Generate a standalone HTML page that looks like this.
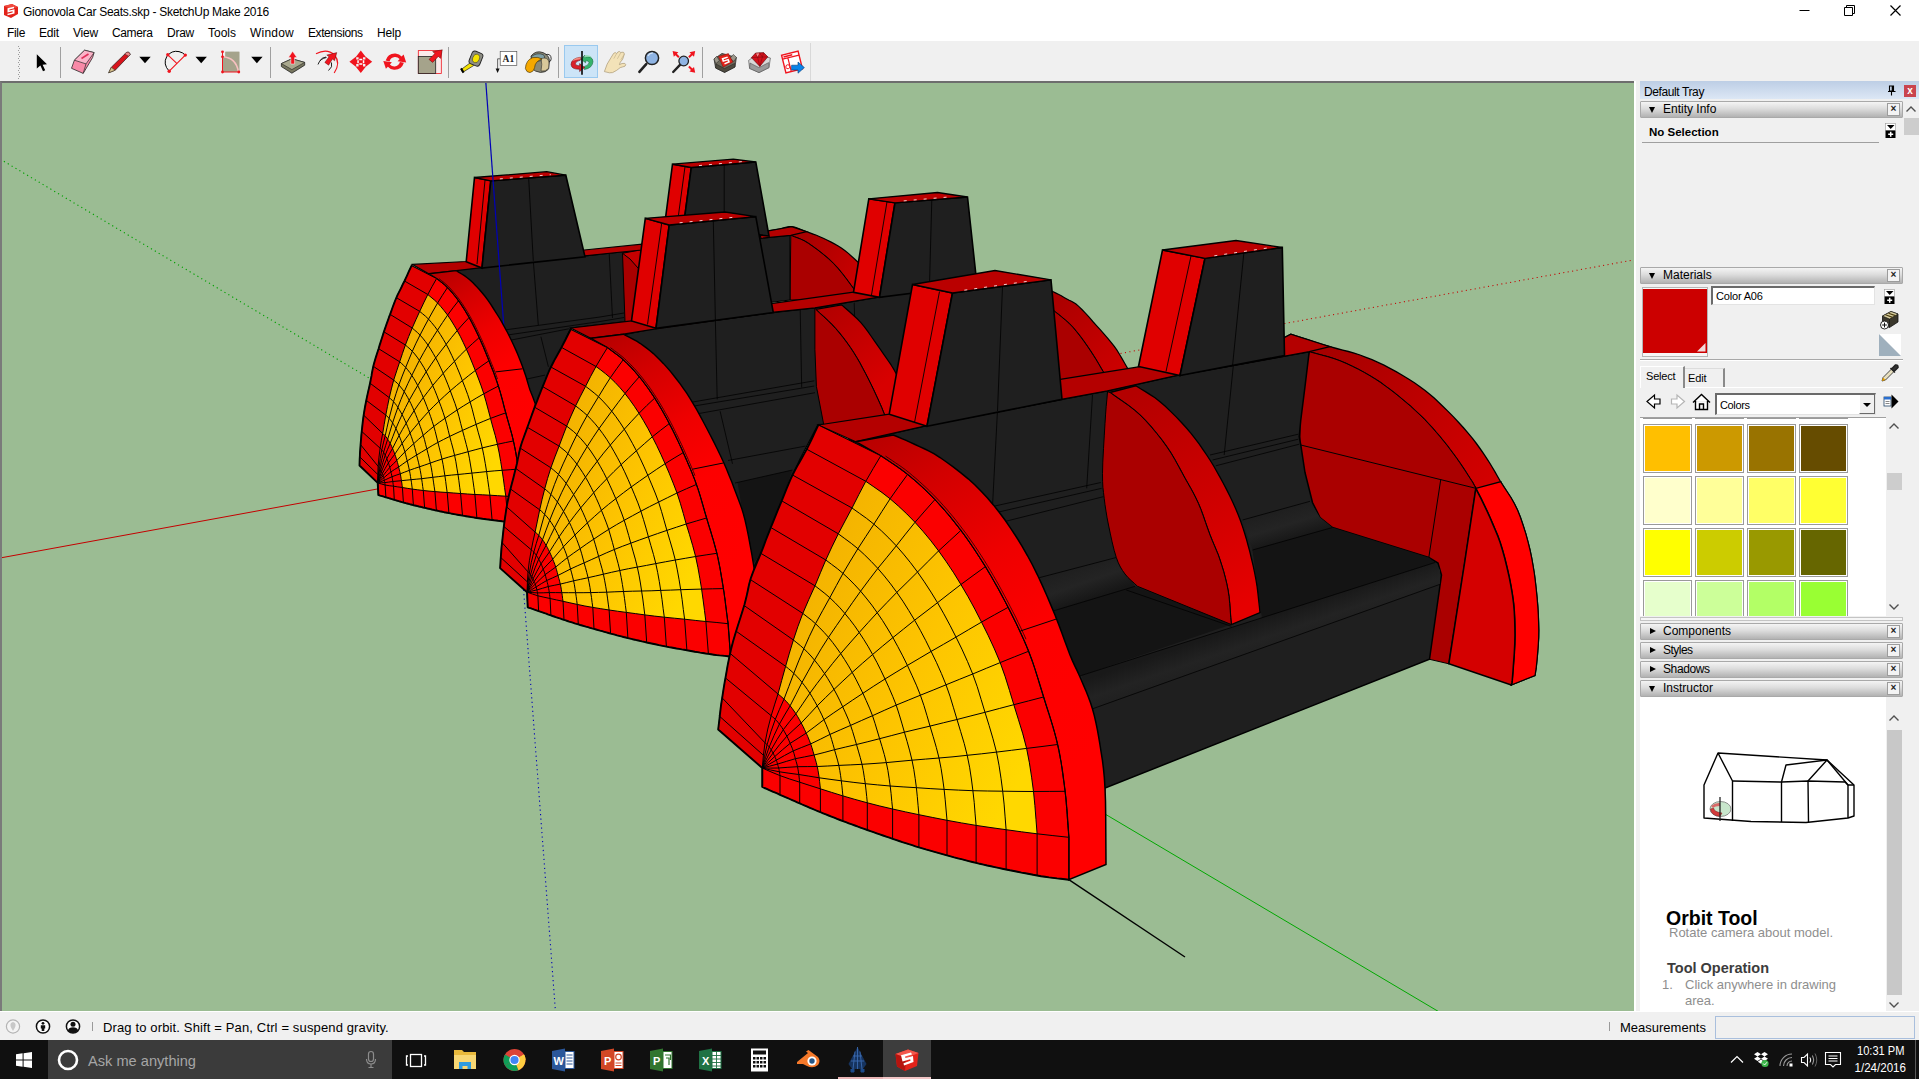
<!DOCTYPE html>
<html lang="en">
<head>
<meta charset="utf-8">
<title>Gionovola Car Seats.skp - SketchUp Make 2016</title>
<style>
*{box-sizing:border-box;margin:0;padding:0}
html,body{width:1919px;height:1079px;overflow:hidden;background:#f0f0f0;font-family:"Liberation Sans",sans-serif;font-size:12px;color:#000}
.abs{position:absolute}
#titlebar{position:absolute;left:0;top:0;width:1919px;height:23px;background:#fff}
#titlebar .t{position:absolute;left:23px;top:5px;font-size:12px;letter-spacing:-0.276px;white-space:nowrap}
#menubar{position:absolute;left:0;top:23px;width:1919px;height:18px;background:#fff}
#menubar span{position:absolute;top:3px;font-size:12px;white-space:nowrap}
#toolbar{position:absolute;left:0;top:41px;width:1919px;height:41px;background:#f0f0f0}
#tbbox{position:absolute;left:0;top:2px;width:811px;height:39px;border-right:1px solid #d8d8d8;border-bottom:1px solid #d8d8d8}
.sep{position:absolute;top:4px;width:1px;height:30px;background:#a8a8a8}
#viewport{position:absolute;left:0;top:81px;width:1634px;height:930px;background:#9bbc93;border-top:2px solid #6d6d6d;border-left:2px solid #7a7a7a;overflow:hidden}
#tray{position:absolute;left:1635px;top:82px;width:284px;height:931px;background:#f0f0f0}
.hdr{position:absolute;left:5px;width:263px;height:17px;border:1px solid #a9a9a9;border-radius:1px;background:linear-gradient(#f4f4f4,#dcdcdc 45%,#b2b2b2);font-size:12px;line-height:15px;white-space:nowrap}
.hdr .tx{position:absolute;left:22px;top:0}
.hdr .cl{position:absolute;right:2px;top:1px;width:13px;height:13px;border:1px solid #9c9c9c;background:#f3f3f3;font-size:10px;line-height:10px;text-align:center;font-weight:bold;color:#222}
.tri-d{position:absolute;left:8px;top:5px;width:0;height:0;border-left:3.5px solid transparent;border-right:3.5px solid transparent;border-top:6px solid #000}
.tri-r{position:absolute;left:9px;top:4px;width:0;height:0;border-top:3.5px solid transparent;border-bottom:3.5px solid transparent;border-left:6px solid #000}
.sw{position:absolute;width:49px;height:49px;border:1px solid #9a9a9a;background:#fff;padding:1px}
.sw i{display:block;width:100%;height:100%}
#status{position:absolute;left:0;top:1011px;width:1919px;height:29px;background:#f0f0f0;border-top:1px solid #fff}
#taskbar{position:absolute;left:0;top:1040px;width:1919px;height:39px;background:#101010}
</style>
</head>
<body>
<div id="titlebar">
<svg class="abs" style="left:3px;top:3px" width="16" height="16" viewBox="0 0 16 16"><path d="M1 3 L9 1 L15 4 L15 11 L8 15 L1 12 Z" fill="#e2231a"/><path d="M1 3 L9 1 L15 4 L8 6 Z" fill="#f04a3e"/><path d="M4.5 5.2 L11 3.8 L11 5.3 L6.3 6.4 L6.3 7.4 L11.5 6.3 L11.5 10.5 L4.5 12.2 L4.5 10.7 L9.6 9.5 L9.6 8.3 L4.5 9.5 Z" fill="#fff"/></svg>
<div class="t">Gionovola Car Seats.skp - SketchUp Make 2016</div>
<svg class="abs" style="left:1780px;top:0" width="139" height="23" viewBox="0 0 139 23"><path d="M19.5 10.5 H29.5" stroke="#000" fill="none"/><path d="M64.5 7.5 H72.5 V15.5 H64.5 Z M66.5 7.5 V5.5 H74.5 V13.5 H72.5" stroke="#000" fill="none"/><path d="M110.5 5.5 L120.5 15.5 M120.5 5.5 L110.5 15.5" stroke="#000" fill="none" stroke-width="1.2"/></svg>
</div>
<div id="menubar">
<span style="left:7px;letter-spacing:-0.336px">File</span><span style="left:39px;letter-spacing:-0.172px">Edit</span><span style="left:73px;letter-spacing:-0.199px">View</span><span style="left:112px;letter-spacing:-0.365px">Camera</span><span style="left:167px;letter-spacing:-0.254px">Draw</span><span style="left:208px;letter-spacing:0px">Tools</span><span style="left:250px;letter-spacing:0.219px">Window</span><span style="left:308px;letter-spacing:-0.42px">Extensions</span><span style="left:377px;letter-spacing:-0.172px">Help</span>
</div>
<div id="toolbar"><div id="tbbox"></div>
<svg class="abs" style="left:0;top:2px" width="812" height="39" viewBox="0 43 812 39">
<g fill="#9a9a9a"><rect x="18" y="46" width="1" height="1"/><rect x="19" y="48" width="1" height="1"/><rect x="18" y="50" width="1" height="1"/><rect x="19" y="52" width="1" height="1"/><rect x="18" y="54" width="1" height="1"/><rect x="19" y="56" width="1" height="1"/><rect x="18" y="58" width="1" height="1"/><rect x="19" y="60" width="1" height="1"/><rect x="18" y="62" width="1" height="1"/><rect x="19" y="64" width="1" height="1"/><rect x="18" y="66" width="1" height="1"/><rect x="19" y="68" width="1" height="1"/><rect x="18" y="70" width="1" height="1"/><rect x="19" y="72" width="1" height="1"/><rect x="18" y="74" width="1" height="1"/><rect x="19" y="76" width="1" height="1"/><rect x="18" y="78" width="1" height="1"/></g>
<g fill="#a0a0a0"><rect x="60" y="47" width="1" height="31"/><rect x="270" y="47" width="1" height="31"/><rect x="448" y="47" width="1" height="31"/><rect x="558" y="47" width="1" height="31"/><rect x="702" y="47" width="1" height="31"/></g>
<!-- select -->
<path d="M36.8 54.2 L36.8 68.6 L40.4 65.6 L43 71.3 L45.2 70.3 L42.6 64.7 L47 64.3 Z" fill="#000"/>
<!-- eraser -->
<path d="M74.4 60.2 L84.6 50.2 L94.1 52.6 L92.6 57.5 L83.2 73.4 L71.5 68.3 Z" fill="#f98aa8" stroke="#2a2a2a" stroke-width="0.8" stroke-linejoin="round"/>
<path d="M74.4 60.2 L84.6 50.2 L94.1 52.6 L86 63.9 Z" fill="#fbb3c8" stroke="#2a2a2a" stroke-width="0.7" stroke-linejoin="round"/>
<path d="M86 63.9 L83.2 73.4" stroke="#2a2a2a" stroke-width="0.7"/>
<path d="M81.5 58.5 L88.5 54" stroke="#e0305a" stroke-width="1.6"/>
<!-- pencil -->
<path d="M108.7 72.8 L111.3 67.3 L126.3 52.6 Q129.5 51.2 130.2 54.6 L115.2 70.2 Z" fill="#d8141c" stroke="#3a2a2a" stroke-width="0.8"/>
<path d="M108.7 72.8 L111.3 67.3 L115.2 70.2 Z" fill="#d9c38e" stroke="#3a3a2a" stroke-width="0.6"/>
<path d="M126.3 52.6 Q129.5 51.2 130.2 54.6 L128.6 56.2 L124.7 54.1 Z" fill="#e88" stroke="#3a2a2a" stroke-width="0.5"/>
<!-- dropdown arrows -->
<path d="M139.3 56.8 L150.7 56.8 L145 63.3 Z M195.5 56.8 L206.9 56.8 L201.2 63.3 Z M251.2 56.8 L262.6 56.8 L256.9 63.3 Z" fill="#000"/>
<!-- arc -->
<path d="M169.2 71.2 Q162.5 64 166.8 56.5 Q171.5 50 179 51.6 Q183 52.5 185.3 55.1" fill="none" stroke="#000" stroke-width="1"/>
<path d="M169.2 71.2 L185.3 55.1 M167.8 54.8 L177.3 63.9" stroke="#f0141e" stroke-width="1.1" fill="none"/>
<g fill="#f0141e"><circle cx="167.8" cy="54.8" r="1.7"/><circle cx="185.3" cy="55.1" r="1.7"/><circle cx="169.2" cy="71.2" r="1.7"/></g>
<!-- shape -->
<rect x="225.4" y="51.8" width="13.9" height="19.8" fill="#a5a38b"/>
<path d="M222.5 56.8 Q236 57.5 238.5 72" fill="#f0f0f0" stroke="none"/>
<path d="M222.5 56.8 L222.5 72 L238.5 72 Q236 57.5 222.5 56.8Z" fill="#a5a38b"/>
<path d="M225.4 51.8 h13.9 v19.8 h-1 Q236 57.5 225.4 56.9 Z" fill="#a5a38b"/>
<path d="M222.5 56.8 Q236 57.5 238.5 72" fill="none" stroke="#f8c0c0" stroke-width="1.6"/>
<path d="M222.5 51.5 L222.5 72 L239 72" fill="none" stroke="#f0141e" stroke-width="1"/>
<g fill="#f0141e"><circle cx="222.5" cy="51.8" r="1.4"/><circle cx="222.5" cy="56.8" r="1.4"/><circle cx="222.5" cy="72" r="1.4"/><circle cx="238.8" cy="72" r="1.4"/></g>
<!-- push pull -->
<path d="M281.4 63.6 L291.9 58.8 L304.7 62.4 L304.7 65.2 L291.9 73.2 L281.4 66.6 Z" fill="#77765f" stroke="#222" stroke-width="0.8" stroke-linejoin="round"/>
<path d="M281.4 63.6 L291.9 58.8 L304.7 62.4 L291.9 69.6 Z" fill="#a9a88e" stroke="#222" stroke-width="0.6" stroke-linejoin="round"/>
<path d="M292.6 51.3 L297 57.6 L294.6 57.6 L294.6 64 L290.8 64 L290.8 57.6 L288.4 57.6 Z" fill="#f0141e" stroke="#fff" stroke-width="0.5"/>
<!-- follow me -->
<path d="M316 53.8 Q327 48 334.5 55 Q341 63 334.2 73" fill="none" stroke="#f0141e" stroke-width="1.2"/>
<path d="M318 64.5 Q320 58.5 326.5 57.5 M328.5 70.5 Q333 67 331.5 62.5 M319.5 61 Q322 57.5 326 57" fill="none" stroke="#222" stroke-width="1"/>
<path d="M336.8 52.6 L334.6 60.8 L332.5 59 L328.6 65.2 L324.8 62.4 L329 56.8 L326.8 55 Z" fill="#f0141e" stroke="#400" stroke-width="0.4"/>
<!-- move -->
<path d="M360.8 50.6 L366 57.2 L363 57.2 L363 59.6 L365.4 59.6 L365.4 56.6 L372.2 61.8 L365.4 67 L365.4 64 L363 64 L363 66.4 L366 66.4 L360.8 73 L355.6 66.4 L358.6 66.4 L358.6 64 L356.2 64 L356.2 67 L349.4 61.8 L356.2 56.6 L356.2 59.6 L358.6 59.6 L358.6 57.2 L355.6 57.2 Z" fill="#f0141e"/>
<path d="M359.3 58.8 h3 v1.5 h-3z M359.3 63.3 h3 v1.5 h-3z M357.3 60.3 h1.5 v3 h-1.5z M362.8 60.3 h1.5 v3 h-1.5z" fill="#fff"/>
<!-- rotate -->
<path d="M385.6 60.6 Q388 53.2 395.5 53.6 Q399.5 54 401.6 56.6 L403.6 54.6 L406.2 62.4 L397.6 61.2 L399.6 59 Q397.5 56.8 394.8 57 Q390.6 57.4 389.6 61.4 Z" fill="#f0141e"/>
<path d="M403.9 62.8 Q401.5 70.2 394 69.8 Q390 69.4 387.9 66.8 L385.9 68.8 L383.3 61 L391.9 62.2 L389.9 64.4 Q392 66.6 394.7 66.4 Q398.9 66 399.9 62 Z" fill="#f0141e"/>
<!-- scale -->
<rect x="418.3" y="50.6" width="23" height="22.8" fill="#fbeaea" stroke="#f0141e" stroke-width="0.8"/>
<rect x="418.3" y="56.4" width="17.4" height="17" fill="#a5a38b" stroke="#222" stroke-width="0.8"/>
<path d="M442.3 49.8 L440.6 58.4 L438.3 56.4 L432.6 62.4 L429 59.4 L434.8 53.6 L432.6 51.6 Z" fill="#f0141e" stroke="#300" stroke-width="0.4"/>
<!-- tape -->
<path d="M462.6 72.4 L461 69.6 L470.8 62.4 L473.6 65.6 Z" fill="#f4e200" stroke="#222" stroke-width="0.7"/>
<path d="M461 68.4 l2.6 4.2" stroke="#000" stroke-width="2"/>
<g transform="rotate(22 476 58.5)"><rect x="470.3" y="51.8" width="11.4" height="13.6" rx="3" fill="#8d8d84" stroke="#222" stroke-width="0.9"/><ellipse cx="476" cy="58.4" rx="3.3" ry="4.4" fill="#f4e200" stroke="#333" stroke-width="0.5"/></g>
<!-- text -->
<rect x="500.2" y="51.4" width="16.6" height="14" fill="#fff" stroke="#555" stroke-width="0.7"/>
<text x="502.6" y="62" font-family="Liberation Serif,serif" font-size="9.5" font-weight="bold" fill="#222">A1</text>
<path d="M500.2 58.8 H497.6 V69.5" fill="none" stroke="#444" stroke-width="0.8"/>
<path d="M495.6 68.6 h4 l-2 4.4z" fill="#111"/>
<!-- paint bucket -->
<path d="M531 56 Q536 50 543 52.6 Q549 55 549.4 60.4 L548.6 69 Q546 72.6 540.4 72.4 Q534.6 71.6 532.6 68.8 Z" fill="#8b8a76" stroke="#222" stroke-width="0.8"/>
<path d="M531.4 56.6 Q536.5 52.2 543.4 54.6 Q546 57 543.6 59.6 Q537 62.6 532.6 60 Z" fill="#7fa0a6" stroke="#222" stroke-width="0.6"/>
<path d="M541 58.6 Q547.6 56.6 549 62 L548.6 68.4 Q545.6 71.6 541 71 Q542.6 64 541 58.6Z" fill="#d9c99a" stroke="#222" stroke-width="0.5"/>
<path d="M525.4 68.6 Q525.8 60 532.8 57.6 Q538.2 56.6 542 59 Q535 61.4 534.6 67.6 Q534 71.8 530 72.6 Q526.4 72.6 525.4 68.6Z" fill="#f5a800" stroke="#3a2a00" stroke-width="0.6"/>
<path d="M545.6 54.6 Q551 53.2 551.2 58.8 Q551 61.6 548.8 62" fill="none" stroke="#222" stroke-width="0.9"/>
<!-- orbit selected -->
<rect x="564.5" y="45.5" width="33" height="32" fill="#cce4f7" stroke="#99c9ef" stroke-width="1"/>
<path d="M583.6 57.4 Q592.6 55 593 61.6 Q592.6 68 584.4 69.6 L584.4 66.4 Q588.8 65.4 589 62.4 Q588.6 60.4 585.6 60.8 L585.6 62.8 L581 59.2 L585 55 Z" fill="#35b36b" stroke="#0c5a2c" stroke-width="0.5"/>
<path d="M584.6 55.4 Q589.6 54.4 592 57.4 Q588 55.8 584.6 57.6 Z" fill="#8fdcae"/>
<path d="M580.4 57.2 Q571.2 58.4 571 64.6 Q571.6 69.6 579.6 69.2 L579.6 71.6 L584.6 67.4 L579.6 63.6 L579.6 65.8 Q575.8 65.8 575.4 63.8 Q575.6 61 580.4 60.2 Z" fill="#d8202a" stroke="#600" stroke-width="0.5"/>
<path d="M580.4 57.2 Q574.4 58 572.2 61 Q575.4 59.6 580.4 59.2Z" fill="#f08a80"/>
<path d="M582 51 V74.8" stroke="#111" stroke-width="1.7"/>
<!-- hand -->
<path d="M604.4 71.6 Q606.6 63.6 611 57.6 L613.6 53.4 Q615.4 51.6 616.6 53.6 L617.8 52 Q619.6 50.6 620.8 52.6 L622 52.2 Q624 51.6 624.4 54 L622.6 59.4 Q619.6 62.4 619.4 64.6 Q622 63 624.8 63.4 Q626.6 64.6 625 66.2 Q619.6 67 616.6 70.4 Q612 73.6 609.4 72.8 Z" fill="#f3e2b8" stroke="#a99876" stroke-width="0.7"/>
<path d="M616.6 53.6 L613.8 58.6 M620.8 52.6 L617.4 58.8 M624.2 54.2 L620.8 60" fill="none" stroke="#c4b48e" stroke-width="0.7"/>
<!-- zoom -->
<path d="M646.2 64.2 L639.4 71.8" stroke="#222" stroke-width="2.6" stroke-linecap="round"/>
<circle cx="652" cy="58" r="6.6" fill="#8fb4e3" stroke="#222" stroke-width="1.5"/>
<path d="M648 56 Q649.6 52.8 653 53" fill="none" stroke="#d6e6f8" stroke-width="1.2"/>
<!-- zoom extents -->
<path d="M680.2 64.6 L673.2 72" stroke="#222" stroke-width="2.4" stroke-linecap="round"/>
<circle cx="683.7" cy="61" r="4.8" fill="#8fb4e3" stroke="#222" stroke-width="1.3"/>
<g fill="#f0141e"><path d="M672.6 51 L678.4 52.2 L676.8 53.8 L679.6 56.6 L678.2 58 L675.4 55.2 L673.8 56.8Z"/><path d="M695.2 51 L694 56.8 L692.4 55.2 L689.6 58 L688.2 56.6 L691 53.8 L689.4 52.2Z"/><path d="M695.2 72.8 L689.4 71.6 L691 70 L688.2 67.2 L689.6 65.8 L692.4 68.6 L694 67Z"/></g>
<!-- warehouse -->
<path d="M714 59 L722 53.4 L736.4 57.4 L735 67 L724.6 72.4 L715.6 68Z" fill="#6e6a5c" stroke="#222" stroke-width="0.7"/>
<path d="M714 59 L716.8 56.2 L719.4 60.6 L715.8 63.6 Z M736.4 57.4 L733.4 54.4 L730 58.4 L734 61.4Z" fill="#9b978a" stroke="#222" stroke-width="0.5"/>
<path d="M718.4 56.4 L728.4 53.6 L732.8 62 L723.2 67 Z" fill="#e2231a" stroke="#7a0d08" stroke-width="0.5"/>
<path d="M721.6 58.2 L727.4 56.4 L728 57.8 L723.6 59.2 L724 60.2 L728.6 58.8 L730 62.2 L724.8 64.6 L724.2 63.2 L728 61.6 L727.6 60.6 L722.8 62 Z" fill="#fff"/>
<path d="M716 64 L724.6 68.6 L734.6 63.4 L735 67 L724.6 72.4 L715.6 68Z" fill="#4e4b40" stroke="#222" stroke-width="0.5"/>
<!-- ruby -->
<path d="M748.6 60.4 L757 54.4 L770.4 58 L769 67.6 L759 72.6 L749.6 68.4Z" fill="#d8d8d8" stroke="#444" stroke-width="0.6"/>
<path d="M750 63 L759 67.6 L768.6 62.6 L769 67.6 L759 72.6 L749.6 68.4Z" fill="#9a9a9a" stroke="#444" stroke-width="0.5"/>
<path d="M751.4 57.6 L755.6 53 L763.6 52.6 L767.8 56.8 L759.8 66.4 Z" fill="#d3121c" stroke="#5a0308" stroke-width="0.6"/>
<path d="M751.4 57.6 L767.8 56.8 M755.6 53 L757.6 57.4 L759.8 66.4 L762.4 57.2 L763.6 52.6 M757.6 57.4 L759.6 52.8 L762.4 57.2" fill="none" stroke="#7a0a10" stroke-width="0.5"/>
<path d="M756 53.4 L759.4 53.2 L757.6 56.8Z" fill="#f58a8a"/>
<!-- layout + arrow -->
<g transform="rotate(-14 792 62)"><rect x="783.5" y="53" width="17" height="18" fill="#fff" stroke="#f0141e" stroke-width="1.4"/><path d="M783.5 57 H800.5 M789 57 V71" stroke="#f0141e" stroke-width="1.2"/><rect x="785" y="54.3" width="9" height="1.6" fill="#f0141e"/><circle cx="786.8" cy="65.6" r="2" fill="none" stroke="#f0141e" stroke-width="0.9"/></g>
<path d="M791.6 65.2 H798 V62 L804.4 67.6 L798 73.2 V70 H791.6Z" fill="#0a84e8" stroke="#033b78" stroke-width="0.6"/>
</svg>
</div>
<div id="viewport"><svg class="abs" style="left:-2px;top:-1px" width="1635" height="931" viewBox="0 82 1635 931"><defs><linearGradient id="yelF" gradientUnits="userSpaceOnUse" x1="770" y1="640" x2="1030" y2="760"><stop offset="0" stop-color="#f3b200"/><stop offset="0.5" stop-color="#fdc400"/><stop offset="1" stop-color="#ffd800"/></linearGradient><linearGradient id="yelM" gradientUnits="userSpaceOnUse" x1="530.5" y1="491.5" x2="698.2" y2="565.2"><stop offset="0" stop-color="#f3b200"/><stop offset="0.5" stop-color="#fdc400"/><stop offset="1" stop-color="#ffd800"/></linearGradient><linearGradient id="yelB" gradientUnits="userSpaceOnUse" x1="379.7" y1="400.9" x2="499.4" y2="451.2"><stop offset="0" stop-color="#f3b200"/><stop offset="0.5" stop-color="#fdc400"/><stop offset="1" stop-color="#ffd800"/></linearGradient><linearGradient id="gRE" gradientUnits="userSpaceOnUse" x1="1300" y1="340" x2="1500" y2="480"><stop offset="0" stop-color="#a00000"/><stop offset="0.6" stop-color="#c00000"/><stop offset="1" stop-color="#d40000"/></linearGradient><linearGradient id="gRO" gradientUnits="userSpaceOnUse" x1="1260" y1="620" x2="1272" y2="655"><stop offset="0" stop-color="#191919"/><stop offset="0.5" stop-color="#232323"/><stop offset="1" stop-color="#1e1e1e"/></linearGradient><linearGradient id="gLB" gradientUnits="userSpaceOnUse" x1="1075" y1="568" x2="1086" y2="600"><stop offset="0" stop-color="#1f1f1f"/><stop offset="0.5" stop-color="#242424"/><stop offset="1" stop-color="#171717"/></linearGradient><linearGradient id="gLB2" gradientUnits="userSpaceOnUse" x1="1275" y1="512" x2="1284" y2="542"><stop offset="0" stop-color="#1f1f1f"/><stop offset="0.5" stop-color="#242424"/><stop offset="1" stop-color="#171717"/></linearGradient><linearGradient id="gAB" gradientUnits="userSpaceOnUse" x1="1140" y1="390" x2="1255" y2="600"><stop offset="0" stop-color="#b40000"/><stop offset="0.5" stop-color="#cc0000"/><stop offset="1" stop-color="#e60000"/></linearGradient><linearGradient id="gDB" gradientUnits="userSpaceOnUse" x1="880" y1="430" x2="1090" y2="760"><stop offset="0" stop-color="#b80000"/><stop offset="0.18" stop-color="#d20000"/><stop offset="0.42" stop-color="#ee0000"/><stop offset="0.65" stop-color="#fd0000"/><stop offset="1" stop-color="#ff0000"/></linearGradient><linearGradient id="gMB" gradientUnits="userSpaceOnUse" x1="610" y1="335" x2="745" y2="560"><stop offset="0" stop-color="#b80000"/><stop offset="0.18" stop-color="#d20000"/><stop offset="0.42" stop-color="#ee0000"/><stop offset="0.65" stop-color="#fd0000"/><stop offset="1" stop-color="#ff0000"/></linearGradient><linearGradient id="gBB" gradientUnits="userSpaceOnUse" x1="445" y1="270" x2="535" y2="420"><stop offset="0" stop-color="#b80000"/><stop offset="0.18" stop-color="#d20000"/><stop offset="0.42" stop-color="#ee0000"/><stop offset="0.65" stop-color="#fd0000"/><stop offset="1" stop-color="#ff0000"/></linearGradient><linearGradient id="gME" gradientUnits="userSpaceOnUse" x1="1050" y1="290" x2="1125" y2="365"><stop offset="0" stop-color="#a80000"/><stop offset="1" stop-color="#cc0000"/></linearGradient><linearGradient id="gBE" gradientUnits="userSpaceOnUse" x1="790" y1="228" x2="860" y2="270"><stop offset="0" stop-color="#a00000"/><stop offset="1" stop-color="#c80000"/></linearGradient><linearGradient id="gMA" gradientUnits="userSpaceOnUse" x1="835" y1="305" x2="895" y2="375"><stop offset="0" stop-color="#b40000"/><stop offset="1" stop-color="#d80000"/></linearGradient></defs><polyline points="0,558 514,464" fill="none" stroke="#c40000" stroke-width="1"/><polyline points="514,464 1636,259.5" fill="none" stroke="#c40000" stroke-width="1.05" stroke-dasharray="1.1 3.4"/><polyline points="0,159 514,464" fill="none" stroke="#00a000" stroke-width="1.15" stroke-dasharray="1.2 3.3"/><polyline points="514,464 1441,1013" fill="none" stroke="#00a800" stroke-width="1"/><polyline points="514,464 555.6,1013" fill="none" stroke="#0000b8" stroke-width="1.1" stroke-dasharray="1.2 3.3"/><polyline points="1068.8,879.7 1185,957" fill="none" stroke="#000" stroke-width="1.4"/><polygon points="768.3,230.8 780,229 782.3,228.4 784.5,227.7 786.8,227.1 789.1,226.7 791.7,226.7 794.5,227.2 797.4,228.1 800.4,229.2 803.5,230.5 806.7,231.7 809.9,232.9 813.1,234.1 816.5,235.3 819.8,236.7 823.3,238.3 826.9,240 830.7,241.9 834.4,243.9 838.2,246 841.7,248.3 845.1,250.8 848.4,253.4 851.5,256.2 854.6,259 857.5,261.7 860.2,264.4 862.7,267 865.2,269.7 867.6,272.3 870,275 860,300 858.9,297.9 858,296 856.9,293.9 855.5,291.5 853.3,288.3 850.2,284.1 846.5,279 842.3,273.6 837.8,268.2 833.3,263.3 828.5,258.8 823.3,254.4 818,250.2 812.9,246.5 808.3,243.3 804.3,240.9 800.8,239.2 797.4,237.9 794.2,236.7 790.8,235.3" fill="url(#gBE)" stroke="#000" stroke-width="1.2"/><polygon points="790.8,235.3 794.2,236.7 797.4,237.9 800.8,239.2 804.3,240.9 808.3,243.3 812.9,246.5 818,250.2 823.3,254.4 828.5,258.8 833.3,263.3 837.8,268.2 842.3,273.6 846.5,279 850.2,284.1 853.3,288.3 855.5,291.5 856.9,293.9 858,296 858.9,297.9 860,300 790,300" fill="#aa0000" stroke="#000" stroke-width="1"/><polygon points="440,275 455.8,269.2 585,255.8 621.7,252 640,250 640,320 570.8,328 552,367.5 541,392 538,412 520,380" fill="#1f1f1f" stroke="#000" stroke-width="1.2"/><polygon points="758,238.6 790,235.3 790,300 765,303" fill="#1f1f1f" stroke="#000" stroke-width="1"/><path d="M533.3 260.8 L538.3 325M609.2 253.3 L612.5 318M504.4 330 L600 317 L624 313M507.5 335 L600 321.5 L624 317.5M511.3 340 L568.8 328.8M540.9 336.7 L548.4 366.8M527 379 L545 375.1" fill="none" stroke="#000" stroke-width="0.9" stroke-opacity="0.85"/><polygon points="622.5,253.3 645,249 640,322 625,322" fill="#aa0000" stroke="#000" stroke-width="1"/><polygon points="622.5,253.3 645,249 640,272 638.3,268.3 630,259" fill="#c40000" stroke="#000" stroke-width="1"/><polygon points="412.5,264.4 466.2,261.5 584.2,250 641.7,244.2 641.7,250 621.7,252 585,255.8 456.3,270.6 428.8,273.8" fill="#b40000" stroke="#000" stroke-width="1.2"/><polygon points="760,232 768.3,230.8 791.7,226.7 806.7,231.7 790.8,235.3 760.8,238.3" fill="#b40000" stroke="#000" stroke-width="1.2"/><polygon points="474.5,177.5 490.8,180.8 482,268 466.2,261.7" fill="#e00000" stroke="#000" stroke-width="1.6"/><polyline points="485,180.3 477,264.2" fill="none" stroke="#000" stroke-width="0.9"/><polygon points="490.8,180.8 565.8,175.2 585,256.8 482,268" fill="#1f1f1f" stroke="#000" stroke-width="1.6"/><polyline points="528.7,178.7 533.3,260.8" fill="none" stroke="#000" stroke-width="0.8"/><polygon points="474.5,177.5 546.7,171.7 565.8,175.2 490.8,180.8" fill="#ba0000" stroke="#000" stroke-width="1.3"/><polyline points="499.8,178.9 550.8,174.7" fill="none" stroke="#fff" stroke-width="0.9" stroke-dasharray="3 7" stroke-opacity="0.9"/><polygon points="672.5,164.2 691.3,167.5 683.5,226 664.5,226" fill="#e00000" stroke="#000" stroke-width="1.6"/><polyline points="685,166.7 677,226" fill="none" stroke="#000" stroke-width="0.9"/><polygon points="691.3,167.5 755.8,162 769,236 683.5,226" fill="#1f1f1f" stroke="#000" stroke-width="1.6"/><polyline points="724.2,165 724.2,215" fill="none" stroke="#000" stroke-width="0.8"/><polygon points="672.5,164.2 733.3,159.2 755.8,162 691.3,167.5" fill="#ba0000" stroke="#000" stroke-width="1.3"/><polyline points="699,165.6 742.9,161.5" fill="none" stroke="#fff" stroke-width="0.9" stroke-dasharray="3 7" stroke-opacity="0.9"/><polyline points="485.8,82 514,464" fill="none" stroke="#0000b8" stroke-width="1.2"/><polygon points="428.8,273.8 456.3,270.6 459,272.4 461.7,274 464.4,275.7 467.2,277.7 470,280 473,282.8 476,285.9 479.1,289.3 482.1,292.8 485,296.3 487.7,299.9 490.3,303.7 492.8,307.5 495.2,311.3 497.5,315 499.7,318.5 501.7,321.9 503.6,325.3 505.5,328.8 507.5,332.5 509.5,336.5 511.6,340.8 513.7,345.2 515.7,349.6 517.5,353.8 519.2,357.9 520.8,362.1 522.3,366.1 523.7,370.1 525,373.8 526.2,377.3 527.2,380.7 528.1,383.9 529,386.9 530,389.9 531,392.6 532,394.9 532.9,397.3 533.9,399.9 535,403 536.2,406.8 537.4,411 538.7,415.6 539.9,420.3 541,425 541.9,429.8 542.7,434.8 543.5,439.9 544.2,445 545,450 524.9,523.3 522.4,497.1 521.6,491.5 520.8,485.9 520.1,480.3 519.3,474.7 518.5,469.1 517.5,463.5 516.6,457.9 515.6,452.2 514.5,446.6 513.3,441 512,435.3 510.4,429.7 508.8,424 507.2,418.4 505.7,412.9 504.2,407.4 502.8,402 501.4,396.7 499.9,391.4 498.3,386.1 496.6,380.9 494.7,375.8 492.8,370.7 490.9,365.7 488.9,360.8 487,356 485.1,351.3 483.1,346.6 481.1,342.1 479.1,337.7 477.1,333.4 475.1,329.3 473.1,325.2 471.1,321.3 469,317.6 466.9,313.9 464.8,310.5 462.7,307.1 460.6,303.9 458.4,300.9 456.2,297.9 454,295.1 451.8,292.5 449.6,290 447.4,287.7 445.2,285.6 443,283.8 440.9,282 438.7,280.3 436.6,278.6" fill="url(#gBB)" stroke="#000" stroke-width="1.4"/><polyline points="495.6,371.9 522.5,368.8" fill="none" stroke="#000" stroke-width="1"/><polygon points="377.7,482.9 378.4,495.1 379.3,495.3 380.2,495.6 381.2,495.9 382.1,496.1 383,496.4 383.9,496.7 384.9,497 385.9,497.3 386.9,497.6 387.9,497.9 388.9,498.2 390,498.5 391.1,498.8 392.1,499.2 393.2,499.5 394.3,499.8 395.4,500.2 396.5,500.5 397.6,500.8 398.8,501.2 399.9,501.5 401,501.8 402.2,502.2 403.4,502.5 404.6,502.8 405.8,503.2 407,503.5 408.3,503.8 409.6,504.2 410.8,504.5 412.1,504.8 413.4,505.2 414.8,505.5 416.1,505.8 417.5,506.1 418.9,506.5 420.3,506.8 421.7,507.1 423.1,507.5 424.6,507.8 426,508.1 427.4,508.5 428.9,508.8 430.4,509.1 431.8,509.5 433.3,509.8 434.8,510.2 436.4,510.5 437.9,510.8 439.4,511.2 440.9,511.5 442.5,511.8 444.1,512.2 445.6,512.5 447.2,512.8 448.9,513.1 450.5,513.4 452.2,513.8 453.9,514.1 455.6,514.4 457.3,514.7 459,515 460.8,515.3 462.5,515.6 464.3,515.9 466,516.2 467.8,516.5 469.6,516.8 471.4,517.1 473.3,517.4 475.1,517.7 476.9,518 478.8,518.2 480.7,518.5 482.6,518.8 484.4,519 486.3,519.3 488.3,519.5 490.2,519.8 492.1,520 494.1,520.3 496.1,520.5 498.1,520.8 500.1,521 502.1,521.3 504.1,521.5 506.1,521.8 508.2,522 510.2,522.3 512.3,522.5 514.4,522.7 516.5,522.8 518.6,522.9 520.7,523 522.8,523.1 524.9,523.3 522.4,497.1 521.9,493.6 521.4,490.1 520.9,486.6 520.5,483.1 520,479.6 519.5,476.1 519,472.6 518.5,469.1 517.9,465.6 517.3,462.1 516.7,458.6 516.1,455.1 515.5,451.5 514.8,448 514.1,444.5 513.3,441 512.5,437.5 511.6,433.9 510.6,430.4 509.6,426.8 508.6,423.3 507.6,419.8 506.6,416.3 505.7,412.9 504.7,409.5 503.8,406.1 503,402.7 502.1,399.3 501.2,396 500.3,392.7 499.3,389.4 498.3,386.1 497.2,382.9 496.1,379.6 494.9,376.4 493.8,373.2 492.6,370.1 491.3,367 490.1,363.9 488.9,360.8 487.7,357.8 486.5,354.8 485.3,351.9 484.1,348.9 482.9,346.1 481.6,343.2 480.4,340.4 479.1,337.7 477.9,335 476.6,332.4 475.4,329.8 474.1,327.2 472.8,324.7 471.6,322.3 470.3,319.9 469,317.6 467.7,315.3 466.4,313.1 465.1,310.9 463.8,308.8 462.4,306.7 461.1,304.7 459.8,302.7 458.4,300.9 457.1,299 455.7,297.2 454.3,295.5 452.9,293.8 451.5,292.2 450.1,290.6 448.8,289.1 447.4,287.7 446,286.4 444.7,285.1 443.3,284 442,282.9 440.6,281.8 439.3,280.7 437.9,279.7 436.6,278.6 411.6,265.7 411.6,265.7 410.4,268.2 409.2,270.7 408.1,273.2 406.9,275.8 405.7,278.4 404.5,281 403.1,283.7 401.8,286.5 400.4,289.3 399,292.1 397.6,294.9 396.4,297.7 395.2,300.5 394.1,303.3 393.1,306 392.1,308.8 391.1,311.6 390.1,314.4 389,317.2 388,320.1 386.9,323.1 385.9,326 384.9,328.9 383.9,331.8 383,334.6 382.1,337.5 381.2,340.3 380.3,343.1 379.4,345.9 378.6,348.7 377.7,351.5 376.8,354.3 375.9,357.1 375.1,359.8 374.3,362.6 373.5,365.4 372.9,368.1 372.4,370.6 371.9,373.2 371.5,375.9 370.9,378.9 370.2,382.5 369.3,386.7 368.2,391.4 367.1,396.4 366,401.7 365,407 364.1,412.3 363.3,417.7 362.6,423.3 362,429 361.4,434.6 361,439.9 360.6,444.7 360.3,448.8 360,452.5 359.9,455.8 359.7,459 359.6,462.2 359.5,465.5" fill="#fb0000" stroke="#000" stroke-width="0.8" stroke-linejoin="round"/><polygon points="359.5,465.5 359.6,462.2 359.7,459 359.9,455.8 360,452.5 360.3,448.8 360.6,444.7 361,439.9 361.4,434.6 362,429 362.6,423.3 363.3,417.7 364.1,412.3 365,407 366,401.7 367.1,396.4 368.2,391.4 369.3,386.7 370.2,382.5 370.9,378.9 371.5,375.9 371.9,373.2 372.4,370.6 372.9,368.1 373.5,365.4 374.3,362.6 375.1,359.8 375.9,357.1 376.8,354.3 377.7,351.5 378.6,348.7 379.4,345.9 380.3,343.1 381.2,340.3 382.1,337.5 383,334.6 383.9,331.8 384.9,328.9 385.9,326 386.9,323.1 388,320.1 389,317.2 390.1,314.4 391.1,311.6 392.1,308.8 393.1,306 394.1,303.3 395.2,300.5 396.4,297.7 397.6,294.9 399,292.1 400.4,289.3 401.8,286.5 403.1,283.7 404.5,281 405.7,278.4 406.9,275.8 408.1,273.2 409.2,270.7 410.4,268.2 411.6,265.7 411.6,265.7 436.6,278.6 435.5,280.5 434.3,282.5 433.2,284.5 432.1,286.5 431,288.5 429.9,290.5 428.8,292.5 427.8,294.5 426.7,296.6 425.7,298.7 424.7,300.8 423.7,302.9 422.7,305.1 421.7,307.2 420.7,309.3 419.7,311.4 418.8,313.5 417.8,315.6 416.8,317.6 415.9,319.7 414.9,321.8 414,323.8 413.1,325.9 412.2,328 411.3,330.1 410.4,332.2 409.5,334.4 408.7,336.5 407.8,338.6 407,340.8 406.2,342.9 405.4,345 404.7,347.1 403.9,349.2 403.2,351.2 402.5,353.3 401.8,355.4 401.2,357.5 400.5,359.6 399.7,361.8 399,364 398.2,366.3 397.4,368.6 396.7,370.9 395.9,373.2 395.1,375.5 394.4,377.8 393.7,380.1 393.1,382.3 392.5,384.6 391.9,386.8 391.4,388.9 390.8,391.1 390.3,393.3 389.8,395.5 389.3,397.7 388.8,399.9 388.3,402 387.9,404.2 387.5,406.3 387,408.5 386.6,410.6 386.2,412.8 385.8,415.1 385.4,417.3 385,419.7 384.6,422 384.2,424.4 383.8,426.8 383.4,429.1 383,431.3 382.7,433.5 382.3,435.5 382,437.3 381.7,439.1 381.3,440.8 381,442.6 380.7,444.3 380.4,446.2 380.1,448.2 379.8,450.3 379.5,452.5 379.2,454.8 379,457.1 378.7,459.5 378.5,461.8 378.3,464.1 378.1,466.3 378,468.5 377.9,470.6 377.8,472.6 377.8,474.7 377.8,476.7 377.8,478.8 377.8,480.8 377.7,482.9" fill="#e20000" stroke="none"/><polygon points="402.4,487.5 401.9,484.1 401.4,480.7 400.9,477.2 400.3,473.8 399.5,470.4 398.6,467 397.8,463.6 396.9,460.4 395.9,457.2 394.8,454.2 393.7,451.2 392.6,448.4 391.4,445.8 390.2,443.4 389,441.2 387.7,439.2 386.4,437.4 385.2,435.8 383.9,434.6 382.7,433.5 382.7,433.5 384.2,424.4 385.8,415.1 387.5,406.3 389.3,397.7 391.4,388.9 393.7,380.1 396.7,370.9 399.7,361.8 402.5,353.3 405.4,345 408.7,336.5 412.2,328 415.9,319.7 419.7,311.4 423.7,302.9 427.8,294.5 427.8,294.5 432.6,298.5 437.6,303 442.6,308.6 447.6,315.1 452.4,322.4 457.2,330.6 461.8,339.5 466.4,349.2 470.9,359.5 475.3,370.5 479.6,381.9 483.8,393.8 487.2,405.9 490.5,418.4 494.1,431.3 497.4,444.3 500,457.3 502.1,470.3 504,483.2 505.8,496.2 505.8,496.2 497.7,495.7 489.9,495.2 482.3,494.8 474.9,494.5 467.6,494 460.6,493.5 453.8,493 447.2,492.5 440.9,492.1 434.9,491.6 429,491.1 423.3,490.5 417.7,489.8 412.3,489.1 407.2,488.3 402.4,487.5" fill="url(#yelB)" stroke="none"/><polyline points="497.5,379.1 496.4,375.9 495.2,372.7 494,369.5 492.8,366.4 491.5,363.3 490.3,360.3 489.1,357.2 487.9,354.2 486.7,351.3 485.5,348.4 484.3,345.5 483,342.6 481.8,339.8 480.5,337.1 479.3,334.4 478,331.7 476.7,329.1 475.5,326.6 474.2,324 472.9,321.6 471.6,319.2 470.3,316.8 469,314.5 467.7,312.3 466.4,310.1 465,308 463.7,305.9 462.4,303.8 461,301.9 459.7,300 458.3,298.1 456.9,296.3 455.5,294.5 454.1,292.8 452.7,291.2 451.3,289.6 449.9,288.1 448.5,286.6 447.1,285.3 445.7,284 444.3,282.8 442.9,281.7 441.5,280.6 440.2,279.6 438.9,278.5" fill="none" stroke="#000" stroke-width="0.7"/><polyline points="411.6,265.7 411.6,265.7 410.4,268.2 409.2,270.7 408.1,273.2 406.9,275.8 405.7,278.4 404.5,281 403.1,283.7 401.8,286.5 400.4,289.3 399,292.1 397.6,294.9 396.4,297.7 395.2,300.5 394.1,303.3 393.1,306 392.1,308.8 391.1,311.6 390.1,314.4 389,317.2 388,320.1 386.9,323.1 385.9,326 384.9,328.9 383.9,331.8 383,334.6 382.1,337.5 381.2,340.3 380.3,343.1 379.4,345.9 378.6,348.7 377.7,351.5 376.8,354.3 375.9,357.1 375.1,359.8 374.3,362.6 373.5,365.4 372.9,368.1 372.4,370.6 371.9,373.2 371.5,375.9 370.9,378.9 370.2,382.5 369.3,386.7 368.2,391.4 367.1,396.4 366,401.7 365,407 364.1,412.3 363.3,417.7 362.6,423.3 362,429 361.4,434.6 361,439.9 360.6,444.7 360.3,448.8 360,452.5 359.9,455.8 359.7,459 359.6,462.2 359.5,465.5 377.7,482.9 378.4,495.1 379.3,495.3 380.2,495.6 381.2,495.9 382.1,496.1 383,496.4 383.9,496.7 384.9,497 385.9,497.3 386.9,497.6 387.9,497.9 388.9,498.2 390,498.5 391.1,498.8 392.1,499.2 393.2,499.5 394.3,499.8 395.4,500.2 396.5,500.5 397.6,500.8 398.8,501.2 399.9,501.5 401,501.8 402.2,502.2 403.4,502.5 404.6,502.8 405.8,503.2 407,503.5 408.3,503.8 409.6,504.2 410.8,504.5 412.1,504.8 413.4,505.2 414.8,505.5 416.1,505.8 417.5,506.1 418.9,506.5 420.3,506.8 421.7,507.1 423.1,507.5 424.6,507.8 426,508.1 427.4,508.5 428.9,508.8 430.4,509.1 431.8,509.5 433.3,509.8 434.8,510.2 436.4,510.5 437.9,510.8 439.4,511.2 440.9,511.5 442.5,511.8 444.1,512.2 445.6,512.5 447.2,512.8 448.9,513.1 450.5,513.4 452.2,513.8 453.9,514.1 455.6,514.4 457.3,514.7 459,515 460.8,515.3 462.5,515.6 464.3,515.9 466,516.2 467.8,516.5 469.6,516.8 471.4,517.1 473.3,517.4 475.1,517.7 476.9,518 478.8,518.2 480.7,518.5 482.6,518.8 484.4,519 486.3,519.3 488.3,519.5 490.2,519.8 492.1,520 494.1,520.3 496.1,520.5 498.1,520.8 500.1,521 502.1,521.3 504.1,521.5 506.1,521.8 508.2,522 510.2,522.3 512.3,522.5 514.4,522.7 516.5,522.8 518.6,522.9 520.7,523 522.8,523.1 524.9,523.3" fill="none" stroke="#000" stroke-width="1.9" stroke-linejoin="round" stroke-linecap="round"/><path d="M385.1 485 L385 484.2 L384.9 483.4 L384.8 482.6 L384.6 481.8 L384.5 481.1 L384.3 480.3 L384.2 479.5 L384 478.7 L383.7 477.9 L383.6 477.2 L383.4 476.4 L383.1 475.7 L382.9 475 L382.7 474.2 L382.4 473.6 L382.1 472.9 L381.9 472.2 L381.6 471.6 L381.3 471 L381.1 470.4 L380.8 469.8 L380.5 469.3 L380.2 468.8 L379.9 468.3 L379.6 467.9 L379.3 467.5 L379 467.2 L378.7 466.8 L378.4 466.6 L378.1 466.3M393.5 486.2 L393.2 484.7 L393 483.1 L392.8 481.5 L392.6 479.9 L392.3 478.3 L392 476.7 L391.7 475.1 L391.3 473.5 L390.9 471.9 L390.5 470.3 L390.2 468.8 L389.8 467.3 L389.3 465.8 L388.9 464.3 L388.4 462.9 L387.9 461.5 L387.4 460.1 L386.8 458.8 L386.3 457.6 L385.8 456.4 L385.2 455.2 L384.7 454.2 L384.1 453.2 L383.6 452.2 L383 451.4 L382.4 450.6 L381.8 449.8 L381.2 449.2 L380.7 448.7 L380.1 448.2M402.4 487.5 L402.1 485.3 L401.8 483 L401.4 480.7 L401.1 478.4 L400.7 476.1 L400.3 473.8 L399.8 471.5 L399.2 469.2 L398.6 467 L398.1 464.7 L397.5 462.5 L396.9 460.4 L396.2 458.2 L395.5 456.2 L394.8 454.2 L394.1 452.2 L393.3 450.3 L392.6 448.4 L391.8 446.7 L391 445 L390.2 443.4 L389.4 441.9 L388.6 440.5 L387.7 439.2 L386.9 438 L386 436.8 L385.2 435.8 L384.3 435 L383.5 434.2 L382.7 433.5M412.3 489.1 L411.9 486 L411.5 482.8 L411 479.7 L410.5 476.6 L410 473.4 L409.4 470.3 L408.7 467.1 L408 464 L407.2 460.9 L406.4 457.8 L405.7 454.8 L404.9 451.9 L404 449 L403.1 446.1 L402.1 443.4 L401.1 440.7 L400.1 438.1 L399.1 435.5 L398 433.1 L397 430.8 L395.9 428.6 L394.8 426.6 L393.7 424.7 L392.6 422.9 L391.4 421.2 L390.3 419.7 L389.1 418.3 L388 417.1 L386.9 416.1 L385.8 415.1M423.3 490.5 L422.7 486.6 L422.2 482.6 L421.6 478.7 L421 474.7 L420.3 470.7 L419.5 466.8 L418.6 462.8 L417.6 458.9 L416.6 455 L415.7 451.2 L414.7 447.4 L413.7 443.7 L412.5 440.1 L411.3 436.5 L410 433 L408.8 429.7 L407.5 426.4 L406.2 423.2 L404.8 420.2 L403.5 417.3 L402.1 414.6 L400.7 412.1 L399.3 409.7 L397.9 407.4 L396.5 405.3 L395 403.4 L393.5 401.7 L392.1 400.2 L390.7 398.9 L389.3 397.7M434.9 491.6 L434.2 486.8 L433.5 482.1 L432.8 477.3 L432.1 472.6 L431.3 467.8 L430.3 463.1 L429.2 458.3 L428 453.6 L426.8 448.9 L425.6 444.3 L424.5 439.7 L423.2 435.3 L421.8 430.9 L420.3 426.6 L418.8 422.5 L417.3 418.4 L415.7 414.5 L414.1 410.7 L412.5 407.1 L410.9 403.6 L409.2 400.3 L407.6 397.3 L405.9 394.4 L404.2 391.7 L402.4 389.2 L400.6 387 L398.9 384.9 L397.2 383.1 L395.4 381.6 L393.7 380.1M447.2 492.5 L446.4 487 L445.7 481.4 L444.9 475.8 L444 470.2 L443.1 464.6 L442 459.1 L440.7 453.5 L439.3 447.9 L437.9 442.4 L436.6 437 L435.3 431.7 L433.8 426.4 L432.2 421.3 L430.5 416.3 L428.7 411.4 L426.9 406.6 L425.1 402 L423.3 397.6 L421.5 393.4 L419.6 389.3 L417.7 385.5 L415.8 381.9 L413.8 378.5 L411.8 375.4 L409.8 372.5 L407.7 369.8 L405.7 367.4 L403.7 365.4 L401.7 363.6 L399.7 361.8M460.6 493.5 L459.7 487.2 L458.9 480.8 L458 474.5 L456.9 468.1 L455.9 461.8 L454.6 455.4 L453.1 449 L451.4 442.7 L449.7 436.4 L448.2 430.3 L446.7 424.2 L445 418.3 L443.1 412.4 L441.1 406.7 L439 401.2 L437 395.8 L434.9 390.5 L432.7 385.5 L430.6 380.7 L428.4 376.1 L426.2 371.8 L424 367.7 L421.7 363.9 L419.4 360.3 L417.1 357.1 L414.7 354 L412.3 351.3 L410 349 L407.7 347 L405.4 345M474.9 494.5 L473.9 487.3 L472.9 480.2 L471.9 473.1 L470.7 466 L469.5 458.8 L468.1 451.7 L466.3 444.6 L464.4 437.4 L462.5 430.4 L460.7 423.5 L459 416.7 L457.1 410 L455 403.5 L452.6 397.1 L450.3 390.8 L448 384.8 L445.6 378.9 L443.2 373.3 L440.7 367.9 L438.3 362.8 L435.7 357.9 L433.2 353.4 L430.6 349.1 L428 345.1 L425.4 341.5 L422.7 338.1 L420 335.1 L417.4 332.5 L414.7 330.2 L412.2 328M489.9 495.2 L488.8 487.3 L487.7 479.5 L486.6 471.6 L485.3 463.7 L483.9 455.8 L482.3 447.9 L480.4 440 L478.2 432.2 L476.1 424.4 L474.1 416.8 L472.2 409.2 L470.1 401.9 L467.7 394.6 L465.1 387.6 L462.4 380.7 L459.8 374 L457.1 367.5 L454.5 361.3 L451.7 355.3 L449 349.7 L446.2 344.3 L443.3 339.3 L440.4 334.6 L437.5 330.2 L434.5 326.2 L431.5 322.5 L428.5 319.1 L425.6 316.3 L422.6 313.8 L419.7 311.4M505.8 496.2 L504.5 487.5 L503.4 478.9 L502.1 470.3 L500.7 461.6 L499.2 453 L497.4 444.3 L495.3 435.7 L492.8 427 L490.5 418.4 L488.3 410.1 L486.1 401.8 L483.8 393.8 L481.1 385.8 L478.2 378 L475.3 370.5 L472.3 363.1 L469.4 356 L466.4 349.2 L463.3 342.6 L460.3 336.4 L457.2 330.6 L454 325.1 L450.8 319.9 L447.6 315.1 L444.2 310.7 L440.9 306.7 L437.6 303 L434.3 299.9 L431 297.2 L427.8 294.5M377.7 482.9 L381.4 484 L385.1 485 L389.2 485.7 L393.5 486.2 L397.8 486.9 L402.4 487.5 L407.2 488.3 L412.3 489.1 L417.7 489.8 L423.3 490.5 L429 491.1 L434.9 491.6 L440.9 492.1 L447.2 492.5 L453.8 493 L460.6 493.5 L467.6 494 L474.9 494.5 L482.3 494.8 L489.9 495.2 L497.7 495.7 L505.8 496.2 L514 496.6 L522.4 497.1M377.7 482.9 L381.2 482.8 L384.8 482.6 L388.7 482.1 L392.8 481.5 L397 481.1 L401.4 480.7 L406.1 480.2 L411 479.7 L416.2 479.2 L421.6 478.7 L427.1 478 L432.8 477.3 L438.8 476.6 L444.9 475.8 L451.3 475.1 L458 474.5 L464.8 473.8 L471.9 473.1 L479.1 472.4 L486.6 471.6 L494.2 470.9 L502.1 470.3 L510.2 469.7 L518.5 469.1M377.7 482.9 L381 481.6 L384.3 480.3 L388.1 478.5 L392 476.7 L396.1 475.2 L400.3 473.8 L404.7 472.1 L409.4 470.3 L414.4 468.5 L419.5 466.8 L424.8 465 L430.3 463.1 L436.1 461 L442 459.1 L448.2 457.2 L454.6 455.4 L461.2 453.6 L468.1 451.7 L475.1 449.8 L482.3 447.9 L489.8 446.1 L497.4 444.3 L505.3 442.6 L513.3 441M377.7 482.9 L380.7 480.5 L383.7 477.9 L387.2 474.9 L390.9 471.9 L394.7 469.4 L398.6 467 L402.8 464 L407.2 460.9 L411.8 458 L416.6 455 L421.6 452 L426.8 448.9 L432.2 445.6 L437.9 442.4 L443.7 439.4 L449.7 436.4 L456 433.4 L462.5 430.4 L469.2 427.4 L476.1 424.4 L483.2 421.4 L490.5 418.4 L498 415.6 L505.7 412.9M377.7 482.9 L380.4 479.3 L383.1 475.7 L386.4 471.5 L389.8 467.3 L393.3 463.8 L396.9 460.4 L400.8 456.2 L404.9 451.9 L409.2 447.8 L413.7 443.7 L418.3 439.5 L423.2 435.3 L428.4 430.8 L433.8 426.4 L439.3 422.3 L445 418.3 L450.9 414.2 L457.1 410 L463.5 405.9 L470.1 401.9 L476.8 397.8 L483.8 393.8 L491 389.9 L498.3 386.1M377.7 482.9 L380 478.3 L382.4 473.6 L385.3 468.2 L388.4 462.9 L391.5 458.5 L394.8 454.2 L398.3 448.9 L402.1 443.4 L406 438.2 L410 433 L414.3 427.8 L418.8 422.5 L423.7 416.9 L428.7 411.4 L433.8 406.2 L439 401.2 L444.5 396 L450.3 390.8 L456.3 385.7 L462.4 380.7 L468.8 375.5 L475.3 370.5 L482 365.6 L488.9 360.8M377.7 482.9 L379.6 477.3 L381.6 471.6 L384.1 465.1 L386.8 458.8 L389.6 453.6 L392.6 448.4 L395.7 442.1 L399.1 435.5 L402.5 429.4 L406.2 423.2 L410 417 L414.1 410.7 L418.6 404.1 L423.3 397.6 L428 391.5 L432.7 385.5 L437.8 379.4 L443.2 373.3 L448.7 367.3 L454.5 361.3 L460.3 355.2 L466.4 349.2 L472.7 343.4 L479.1 337.7M377.7 482.9 L379.2 476.4 L380.8 469.8 L382.9 462.4 L385.2 455.2 L387.6 449.3 L390.2 443.4 L393 436.2 L395.9 428.6 L398.9 421.6 L402.1 414.6 L405.5 407.5 L409.2 400.3 L413.4 392.9 L417.7 385.5 L421.9 378.6 L426.2 371.8 L430.9 364.8 L435.7 357.9 L440.9 351.1 L446.2 344.3 L451.6 337.4 L457.2 330.6 L463 324 L469 317.6M377.7 482.9 L378.7 475.7 L379.9 468.3 L381.6 460.2 L383.6 452.2 L385.6 445.7 L387.7 439.2 L390.1 431.2 L392.6 422.9 L395.2 415.1 L397.9 407.4 L400.9 399.6 L404.2 391.7 L407.9 383.5 L411.8 375.4 L415.6 367.8 L419.4 360.3 L423.6 352.7 L428 345.1 L432.7 337.7 L437.5 330.2 L442.5 322.6 L447.6 315.1 L452.9 307.9 L458.4 300.9M377.7 482.9 L378.3 475.1 L379 467.2 L380.3 458.4 L381.8 449.8 L383.4 442.9 L385.2 435.8 L387.1 427.2 L389.1 418.3 L391.3 410 L393.5 401.7 L396.1 393.4 L398.9 384.9 L402.2 376.1 L405.7 367.4 L409 359.3 L412.3 351.3 L416 343.2 L420 335.1 L424.2 327.1 L428.5 319.1 L433 311 L437.6 303 L442.4 295.3 L447.4 287.7M377.7 482.9 L377.8 474.7 L378.1 466.3 L379 457.1 L380.1 448.2 L381.3 440.8 L382.7 433.5 L384.2 424.4 L385.8 415.1 L387.5 406.3 L389.3 397.7 L391.4 388.9 L393.7 380.1 L396.7 370.9 L399.7 361.8 L402.5 353.3 L405.4 345 L408.7 336.5 L412.2 328 L415.9 319.7 L419.7 311.4 L423.7 302.9 L427.8 294.5 L432.1 286.5 L436.6 278.6M360.6 444.7 L378.1 466.3M361.7 431.4 L380.1 448.2M363.7 415.2 L382.7 433.5M366.3 400.4 L385.8 415.1M370 383.2 L389.3 397.7M373.3 366.3 L393.7 380.1M378.6 348.7 L399.7 361.8M383.9 331.8 L405.4 345M390.1 314.4 L412.2 328M396.4 297.7 L419.7 311.4M404.5 281 L427.8 294.5M359.5 456.6 L377.9 474.6M385.1 485 L385.9 497.3M393.5 486.2 L394.3 499.8M402.4 487.5 L403.4 502.5M412.3 489.1 L413.4 505.2M423.3 490.5 L424.6 507.8M434.9 491.6 L436.4 510.5M447.2 492.5 L448.9 513.1M460.6 493.5 L462.5 515.6M474.9 494.5 L476.9 518M489.9 495.2 L492.1 520M505.8 496.2 L508.2 522M522.4 497.1 L524.9 523.3M377.7 482.9 L378.4 495.1M522.4 497.1 L521.9 493.6 L521.4 490.1 L520.9 486.6 L520.5 483.1 L520 479.6 L519.5 476.1 L519 472.6 L518.5 469.1 L517.9 465.6 L517.3 462.1 L516.7 458.6 L516.1 455.1 L515.5 451.5 L514.8 448 L514.1 444.5 L513.3 441 L512.5 437.5 L511.6 433.9 L510.6 430.4 L509.6 426.8 L508.6 423.3 L507.6 419.8 L506.6 416.3 L505.7 412.9 L504.7 409.5 L503.8 406.1 L503 402.7 L502.1 399.3 L501.2 396 L500.3 392.7 L499.3 389.4 L498.3 386.1 L497.2 382.9 L496.1 379.6 L494.9 376.4 L493.8 373.2 L492.6 370.1 L491.3 367 L490.1 363.9 L488.9 360.8 L487.7 357.8 L486.5 354.8 L485.3 351.9 L484.1 348.9 L482.9 346.1 L481.6 343.2 L480.4 340.4 L479.1 337.7 L477.9 335 L476.6 332.4 L475.4 329.8 L474.1 327.2 L472.8 324.7 L471.6 322.3 L470.3 319.9 L469 317.6 L467.7 315.3 L466.4 313.1 L465.1 310.9 L463.8 308.8 L462.4 306.7 L461.1 304.7 L459.8 302.7 L458.4 300.9 L457.1 299 L455.7 297.2 L454.3 295.5 L452.9 293.8 L451.5 292.2 L450.1 290.6 L448.8 289.1 L447.4 287.7 L446 286.4 L444.7 285.1 L443.3 284 L442 282.9 L440.6 281.8 L439.3 280.7 L437.9 279.7 L436.6 278.6M411.6 265.7 L436.6 278.6" fill="none" stroke="#000" stroke-width="1"/><polygon points="1040,286 1042.5,287.1 1045,288.1 1047.5,289.2 1050.1,290.3 1052.7,291.5 1055.5,292.9 1058.3,294.3 1061.3,295.8 1064.1,297.4 1066.8,298.9 1069.2,300.2 1071.4,301.3 1073.6,302.6 1076,304.1 1078.7,306.4 1081.9,309.5 1085.4,313.2 1089.1,317.2 1092.8,321.5 1096.5,325.6 1100.2,329.7 1103.9,333.9 1107.6,338.1 1111.1,342.3 1114.3,346.4 1117.1,350.4 1119.6,354.5 1121.9,358.4 1124.1,362.2 1126.1,365.7 1127.9,368.9 1129.5,371.8 1131,374.5 1132.5,377.2 1134,380 1110,385 1108.7,382.4 1107.5,380 1106.3,377.5 1104.8,374.7 1103.1,371.6 1101,368 1098.7,364 1096.2,359.8 1093.4,355.4 1090.5,350.9 1087.3,346.2 1083.8,341.2 1080.1,336.2 1076.3,331.4 1072.7,327.1 1069.1,323.4 1065.4,320.1 1061.8,317.1 1058.3,314.3 1054.9,311.6 1051.7,309 1048.7,306.7 1045.8,304.5 1042.9,302.3 1040,300" fill="url(#gME)" stroke="#000" stroke-width="1.2"/><polygon points="1040,300 1042.9,302.3 1045.8,304.5 1048.7,306.7 1051.7,309 1054.9,311.6 1058.3,314.3 1061.8,317.1 1065.4,320.1 1069.1,323.4 1072.7,327.1 1076.3,331.4 1080.1,336.2 1083.8,341.2 1087.3,346.2 1090.5,350.9 1093.4,355.4 1096.2,359.8 1098.7,364 1101,368 1103.1,371.6 1104.8,374.7 1106.3,377.5 1107.5,380 1108.7,382.4 1110,385 1040,390" fill="#aa0000" stroke="#000" stroke-width="1"/><polygon points="600,345 626.7,334.1 655.6,328.2 772.8,312.6 814.9,307.8 877.2,297.4 915,291.5 915,420 818,424.6 799.5,460 781.7,500.8 760.8,553.3 750,575 700,480" fill="#1f1f1f" stroke="#000" stroke-width="1.2"/><polygon points="737.5,482.5 792.5,470 781.7,500.8 760.8,553.3 752,566" fill="#141414" stroke="none"/><path d="M714.9 300 L717.2 399.4M800.2 309.6 L801.7 387.5M690 402.5 L814.3 380.8M693 406.2 L814.3 386M699 413.5 L815 392.7M720.1 411.2 L732.5 463.8M728 460.5 L805.4 446.1M735 483 L792.5 470M854.2 302.6 L855 330" fill="none" stroke="#000" stroke-width="0.9" stroke-opacity="0.85"/><polygon points="815.7,309.3 841.6,304.8 845.5,308.3 849.5,311.7 853.4,315.2 857.2,318.8 860.9,322.6 864.4,326.8 867.8,331.3 871,336 874.2,340.6 877.2,344.9 880.2,349.1 883.1,353.3 885.9,357.3 888.4,361 890.6,364.2 892.2,366.7 893.4,368.6 894.3,370.3 895.3,372.1 896.5,374.5 898,377.5 899.7,381 901.5,384.7 903.3,388.4 905,392 890,416 885,416 884.2,413.9 883.4,411.9 882.6,409.9 881.6,407.4 880.2,404.2 878.3,400 876.1,395.2 873.6,389.8 871,384.4 868.3,379 865.6,373.7 862.7,368.3 859.8,362.8 856.7,357.5 853.5,352.3 850.2,347.3 846.7,342.4 843.1,337.6 839.4,333 835.7,328.6 831.8,324.5 827.9,320.6 823.8,316.8 819.7,313.1 815.7,309.3" fill="url(#gMA)" stroke="#000" stroke-width="1.2"/><polygon points="814.9,308.5 814.9,349.3 816.4,386.4 823.8,425 885,416 885,416 884.2,413.9 883.4,411.9 882.6,409.9 881.6,407.4 880.2,404.2 878.3,400 876.1,395.2 873.6,389.8 871,384.4 868.3,379 865.6,373.7 862.7,368.3 859.8,362.8 856.7,357.5 853.5,352.3 850.2,347.3 846.7,342.4 843.1,337.6 839.4,333 835.7,328.6 831.8,324.5 827.9,320.6 823.8,316.8 819.7,313.1 815.7,309.3" fill="#aa0000" stroke="#000" stroke-width="1"/><polygon points="570.8,328 631.7,320.8 772.7,303.3 853.5,292.2 915,283.5 915,291.5 877.2,297.4 814.9,307.8 774.1,312.2 654.2,329.2 623.3,334.2 590.8,338.3" fill="#b40000" stroke="#000" stroke-width="1.2"/><polygon points="645.3,218.3 669.2,225 656,328.3 631.5,321" fill="#e00000" stroke="#000" stroke-width="1.6"/><polyline points="661.7,223.3 647.5,324.5" fill="none" stroke="#000" stroke-width="0.9"/><polygon points="669.2,225 755.8,216.7 773.3,312.5 656,328.3" fill="#1f1f1f" stroke="#000" stroke-width="1.6"/><polyline points="713.3,220.8 715.4,321" fill="none" stroke="#000" stroke-width="0.8"/><polygon points="645.3,218.3 725,212 755.8,216.7 669.2,225" fill="#ba0000" stroke="#000" stroke-width="1.3"/><polyline points="679.6,222.8 738.5,216.8" fill="none" stroke="#fff" stroke-width="0.9" stroke-dasharray="3 7" stroke-opacity="0.9"/><polygon points="868.8,198.8 895,202.8 879.5,297.3 853.5,292.3" fill="#e00000" stroke="#000" stroke-width="1.6"/><polyline points="887,201.8 871.5,295" fill="none" stroke="#000" stroke-width="0.9"/><polygon points="895,202.8 967.5,197 977,285 879.5,297.3" fill="#1f1f1f" stroke="#000" stroke-width="1.6"/><polyline points="931.8,200 929.5,285" fill="none" stroke="#000" stroke-width="0.8"/><polygon points="868.8,198.8 937.5,192.5 967.5,197 895,202.8" fill="#ba0000" stroke="#000" stroke-width="1.3"/><polyline points="903.7,200.9 953,196.6" fill="none" stroke="#fff" stroke-width="0.9" stroke-dasharray="3 7" stroke-opacity="0.9"/><polygon points="590.8,338.3 623.3,334.2 626.6,336 630,337.6 633.3,339.4 636.7,341.2 640,343.3 643.3,345.6 646.7,348.1 650,350.8 653.4,353.6 656.7,356.7 660,360 663.3,363.4 666.7,367.1 670,370.9 673.3,375 676.6,379.2 680,383.6 683.3,388.3 686.7,393.1 690,398.3 693.3,403.8 696.7,409.7 700,415.7 703.4,422 706.7,428.3 710.1,434.8 713.5,441.4 716.9,448.2 720.2,455 723.3,461.7 726.3,468.5 729.1,475.4 731.9,482.3 734.4,488.9 736.7,495 738.7,500.2 740.4,504.7 741.9,509.1 743.4,514 745,520 746.7,527.6 748.5,536.3 750.2,545.6 751.9,554.8 753.3,563.3 754.5,571 755.6,578.3 756.5,585.4 757.3,592.6 758,600 758.6,607.8 759,615.8 759.3,623.8 759.6,631.9 760,640 730.5,656.5 728,623.7 727,616.6 726.1,609.6 725.3,602.6 724.3,595.6 723.3,588.6 722.2,581.5 721,574.5 719.7,567.4 718.3,560.4 716.8,553.3 714.9,546.2 712.9,539.1 710.8,532 708.6,525 706.5,518 704.5,511.2 702.6,504.4 700.6,497.7 698.6,491.1 696.3,484.5 693.9,478 691.3,471.5 688.7,465.2 685.9,458.9 683.2,452.7 680.5,446.7 677.7,440.7 674.9,434.9 672.1,429.2 669.2,423.7 666.4,418.3 663.5,413 660.5,407.9 657.6,402.9 654.6,398.2 651.6,393.6 648.5,389.2 645.4,384.9 642.3,380.8 639.2,376.9 636,373.1 632.8,369.5 629.6,366.1 626.3,362.9 623.1,359.9 620,357.1 616.8,354.7 613.6,352.3 610.5,350.1 607.4,347.7" fill="url(#gMB)" stroke="#000" stroke-width="1.4"/><polyline points="692.5,469.2 723.3,463" fill="none" stroke="#000" stroke-width="1"/><polygon points="527.1,592.2 527.7,607.3 529.1,607.8 530.4,608.2 531.7,608.7 533.1,609.1 534.4,609.6 535.8,610.1 537.2,610.6 538.6,611.1 540.1,611.6 541.6,612.1 543.1,612.6 544.6,613.2 546.2,613.7 547.8,614.3 549.3,614.8 550.9,615.4 552.5,616 554.1,616.5 555.7,617.1 557.3,617.6 559,618.2 560.6,618.7 562.3,619.3 564,619.9 565.7,620.4 567.4,621 569.2,621.6 571,622.1 572.8,622.7 574.6,623.3 576.5,623.8 578.3,624.4 580.2,625 582.1,625.5 584.1,626.1 586,626.7 588,627.2 590,627.8 592,628.4 594,628.9 596.1,629.5 598.1,630.1 600.1,630.7 602.2,631.2 604.3,631.8 606.4,632.4 608.5,633 610.6,633.6 612.7,634.1 614.8,634.7 617,635.3 619.1,635.8 621.3,636.4 623.5,637 625.7,637.5 627.9,638.1 630.2,638.6 632.5,639.2 634.8,639.7 637.2,640.3 639.5,640.8 641.9,641.4 644.3,641.9 646.7,642.5 649.1,643 651.5,643.5 654,644 656.4,644.5 658.9,645.1 661.4,645.6 663.9,646.1 666.4,646.6 668.9,647.1 671.4,647.5 674,648 676.5,648.5 679.1,648.9 681.7,649.4 684.3,649.8 686.9,650.3 689.5,650.7 692.2,651.2 694.8,651.7 697.5,652.1 700.2,652.6 702.9,653 705.6,653.5 708.4,653.9 711.1,654.3 713.8,654.7 716.6,655.1 719.4,655.4 722.2,655.6 724.9,655.9 727.7,656.2 730.5,656.5 728,623.7 727.4,619.2 726.8,614.8 726.3,610.5 725.7,606.1 725.2,601.7 724.6,597.3 724,592.9 723.3,588.6 722.6,584.2 721.9,579.8 721.1,575.4 720.4,570.9 719.6,566.5 718.7,562.1 717.8,557.7 716.8,553.3 715.6,548.9 714.4,544.5 713.2,540 711.8,535.6 710.5,531.1 709.1,526.7 707.8,522.4 706.5,518 705.2,513.7 704,509.5 702.8,505.3 701.6,501.1 700.4,496.9 699.1,492.7 697.8,488.6 696.3,484.5 694.9,480.4 693.3,476.4 691.7,472.3 690,468.3 688.3,464.4 686.6,460.4 684.9,456.6 683.2,452.7 681.5,448.9 679.8,445.2 678.1,441.5 676.3,437.8 674.6,434.2 672.8,430.6 671,427.1 669.2,423.7 667.5,420.3 665.6,416.9 663.8,413.6 662,410.4 660.2,407.3 658.3,404.2 656.4,401.1 654.6,398.2 652.7,395.3 650.8,392.5 648.9,389.7 647,387 645,384.4 643.1,381.8 641.2,379.3 639.2,376.9 637.2,374.5 635.2,372.2 633.2,370 631.2,367.8 629.2,365.7 627.1,363.7 625.1,361.7 623.1,359.9 621.1,358.1 619.2,356.5 617.2,355 615.2,353.5 613.2,352.1 611.3,350.6 609.3,349.2 607.4,347.7 570.7,329.4 570.7,329.4 569.2,332.4 567.7,335.3 566.2,338.3 564.7,341.3 563.1,344.3 561.5,347.4 559.8,350.5 558,353.8 556.2,357 554.3,360.4 552.6,363.7 550.9,367 549.4,370.2 548,373.5 546.7,376.7 545.4,380 544,383.3 542.7,386.6 541.3,390 540,393.4 538.6,396.8 537.3,400.3 535.9,403.8 534.6,407.2 533.4,410.6 532.2,413.9 531,417.3 529.8,420.6 528.6,424 527.4,427.3 526.2,430.6 525,433.9 523.8,437.2 522.6,440.5 521.5,443.8 520.5,447.1 519.7,450.3 519,453.3 518.4,456.4 517.7,459.6 517,463.3 516,467.6 514.7,472.6 513.3,478.2 511.7,484.3 510.1,490.6 508.6,497 507.3,503.3 506.2,509.8 505.2,516.7 504.2,523.6 503.4,530.4 502.7,536.8 502.1,542.6 501.5,547.6 501.2,552.1 500.9,556.2 500.6,560.1 500.4,564 500.1,568.1" fill="#fb0000" stroke="#000" stroke-width="0.8" stroke-linejoin="round"/><polygon points="500.1,568.1 500.4,564 500.6,560.1 500.9,556.2 501.2,552.1 501.5,547.6 502.1,542.6 502.7,536.8 503.4,530.4 504.2,523.6 505.2,516.7 506.2,509.8 507.3,503.3 508.6,497 510.1,490.6 511.7,484.3 513.3,478.2 514.7,472.6 516,467.6 517,463.3 517.7,459.6 518.4,456.4 519,453.3 519.7,450.3 520.5,447.1 521.5,443.8 522.6,440.5 523.8,437.2 525,433.9 526.2,430.6 527.4,427.3 528.6,424 529.8,420.6 531,417.3 532.2,413.9 533.4,410.6 534.6,407.2 535.9,403.8 537.3,400.3 538.6,396.8 540,393.4 541.3,390 542.7,386.6 544,383.3 545.4,380 546.7,376.7 548,373.5 549.4,370.2 550.9,367 552.6,363.7 554.3,360.4 556.2,357 558,353.8 559.8,350.5 561.5,347.4 563.1,344.3 564.7,341.3 566.2,338.3 567.7,335.3 569.2,332.4 570.7,329.4 570.7,329.4 607.4,347.7 605.9,350 604.5,352.4 603,354.7 601.6,357 600.2,359.3 598.8,361.7 597.4,364.1 596,366.5 594.7,368.9 593.3,371.4 592,373.8 590.7,376.3 589.4,378.9 588.2,381.4 586.9,383.9 585.6,386.3 584.3,388.8 583.1,391.3 581.8,393.7 580.5,396.1 579.3,398.6 578.1,401 576.8,403.5 575.6,405.9 574.5,408.4 573.3,410.9 572.2,413.4 571,416 569.9,418.5 568.8,421 567.7,423.5 566.7,426.1 565.7,428.6 564.7,431 563.8,433.5 562.9,436 561.9,438.4 561,440.9 560.1,443.5 559.1,446.1 558.1,448.7 557,451.4 556,454.1 554.9,456.9 553.8,459.6 552.8,462.4 551.8,465.1 550.9,467.8 550,470.5 549.1,473.2 548.3,475.8 547.6,478.4 546.8,481 546.1,483.7 545.4,486.3 544.7,488.9 544,491.5 543.3,494.1 542.7,496.7 542.1,499.3 541.5,501.9 540.9,504.5 540.3,507.2 539.7,509.8 539.1,512.6 538.5,515.4 537.9,518.3 537.4,521.1 536.8,524 536.2,526.8 535.7,529.5 535.1,532.1 534.6,534.5 534.1,536.7 533.6,538.9 533.1,540.9 532.6,543 532.2,545.2 531.7,547.4 531.3,549.8 530.8,552.4 530.3,555 529.9,557.8 529.4,560.7 529,563.5 528.6,566.4 528.3,569.2 528,571.9 527.8,574.5 527.6,577.1 527.5,579.6 527.4,582.1 527.3,584.6 527.2,587.1 527.2,589.6 527.1,592.2" fill="#e20000" stroke="none"/><polygon points="563,601.3 562.4,597 561.8,592.7 561.1,588.4 560.3,584.1 559.2,579.7 558,575.4 556.9,571.2 555.7,567.1 554.3,563.1 552.7,559.2 551.2,555.4 549.5,551.8 547.8,548.5 546.1,545.3 544.4,542.4 542.5,539.8 540.7,537.4 538.8,535.3 537,533.6 535.1,532.1 535.1,532.1 537.4,521.1 539.7,509.8 542.1,499.3 544.7,488.9 547.6,478.4 550.9,467.8 554.9,456.9 559.1,446.1 562.9,436 566.7,426.1 571,416 575.6,405.9 580.5,396.1 585.6,386.3 590.7,376.3 596,366.5 596,366.5 603.1,371.8 610.3,377.8 617.7,385.1 625,393.5 632.1,402.9 639,413.3 645.7,424.6 652.3,436.8 658.8,449.9 665.1,463.7 671.2,478.1 677,493 681.8,508.3 686.2,524 691.1,540.2 695.6,556.5 698.9,572.8 701.6,589.1 703.8,605.3 705.9,621.5 705.9,621.5 695.2,620.4 684.6,619.2 674.4,618.2 664.3,617.2 654.5,616.1 644.8,614.9 635.4,613.6 626.3,612.4 617.5,611.2 609.1,610 600.8,608.7 592.8,607.4 584.9,606 577.2,604.4 569.9,602.8 563,601.3" fill="url(#yelM)" stroke="none"/><polyline points="695,475.7 693.4,471.6 691.7,467.6 690,463.6 688.3,459.7 686.6,455.8 684.9,452 683.2,448.2 681.5,444.4 679.7,440.7 678,437 676.2,433.4 674.4,429.8 672.7,426.3 670.9,422.8 669.1,419.4 667.3,416 665.4,412.8 663.6,409.5 661.7,406.3 659.9,403.2 658,400.2 656.1,397.2 654.2,394.3 652.3,391.4 650.4,388.6 648.5,385.9 646.5,383.3 644.6,380.7 642.6,378.2 640.6,375.7 638.6,373.3 636.6,371 634.6,368.7 632.5,366.5 630.5,364.4 628.4,362.4 626.4,360.4 624.4,358.5 622.3,356.7 620.3,355.1 618.3,353.5 616.3,352 614.3,350.6 612.4,349.1 610.4,347.7" fill="none" stroke="#000" stroke-width="0.7"/><polyline points="570.7,329.4 570.7,329.4 569.2,332.4 567.7,335.3 566.2,338.3 564.7,341.3 563.1,344.3 561.5,347.4 559.8,350.5 558,353.8 556.2,357 554.3,360.4 552.6,363.7 550.9,367 549.4,370.2 548,373.5 546.7,376.7 545.4,380 544,383.3 542.7,386.6 541.3,390 540,393.4 538.6,396.8 537.3,400.3 535.9,403.8 534.6,407.2 533.4,410.6 532.2,413.9 531,417.3 529.8,420.6 528.6,424 527.4,427.3 526.2,430.6 525,433.9 523.8,437.2 522.6,440.5 521.5,443.8 520.5,447.1 519.7,450.3 519,453.3 518.4,456.4 517.7,459.6 517,463.3 516,467.6 514.7,472.6 513.3,478.2 511.7,484.3 510.1,490.6 508.6,497 507.3,503.3 506.2,509.8 505.2,516.7 504.2,523.6 503.4,530.4 502.7,536.8 502.1,542.6 501.5,547.6 501.2,552.1 500.9,556.2 500.6,560.1 500.4,564 500.1,568.1 527.1,592.2 527.7,607.3 529.1,607.8 530.4,608.2 531.7,608.7 533.1,609.1 534.4,609.6 535.8,610.1 537.2,610.6 538.6,611.1 540.1,611.6 541.6,612.1 543.1,612.6 544.6,613.2 546.2,613.7 547.8,614.3 549.3,614.8 550.9,615.4 552.5,616 554.1,616.5 555.7,617.1 557.3,617.6 559,618.2 560.6,618.7 562.3,619.3 564,619.9 565.7,620.4 567.4,621 569.2,621.6 571,622.1 572.8,622.7 574.6,623.3 576.5,623.8 578.3,624.4 580.2,625 582.1,625.5 584.1,626.1 586,626.7 588,627.2 590,627.8 592,628.4 594,628.9 596.1,629.5 598.1,630.1 600.1,630.7 602.2,631.2 604.3,631.8 606.4,632.4 608.5,633 610.6,633.6 612.7,634.1 614.8,634.7 617,635.3 619.1,635.8 621.3,636.4 623.5,637 625.7,637.5 627.9,638.1 630.2,638.6 632.5,639.2 634.8,639.7 637.2,640.3 639.5,640.8 641.9,641.4 644.3,641.9 646.7,642.5 649.1,643 651.5,643.5 654,644 656.4,644.5 658.9,645.1 661.4,645.6 663.9,646.1 666.4,646.6 668.9,647.1 671.4,647.5 674,648 676.5,648.5 679.1,648.9 681.7,649.4 684.3,649.8 686.9,650.3 689.5,650.7 692.2,651.2 694.8,651.7 697.5,652.1 700.2,652.6 702.9,653 705.6,653.5 708.4,653.9 711.1,654.3 713.8,654.7 716.6,655.1 719.4,655.4 722.2,655.6 724.9,655.9 727.7,656.2 730.5,656.5" fill="none" stroke="#000" stroke-width="1.9" stroke-linejoin="round" stroke-linecap="round"/><path d="M537.9 595.8 L537.8 594.8 L537.6 593.9 L537.5 592.9 L537.3 591.9 L537.1 590.9 L536.9 589.9 L536.6 589 L536.4 588 L536.1 587 L535.8 586 L535.6 585.1 L535.3 584.1 L534.9 583.2 L534.6 582.3 L534.2 581.4 L533.8 580.5 L533.5 579.7 L533.1 578.8 L532.7 578 L532.3 577.3 L531.9 576.6 L531.5 575.9 L531.1 575.2 L530.6 574.6 L530.2 574 L529.7 573.5 L529.3 573 L528.9 572.6 L528.4 572.2 L528 571.9M550.1 598.5 L549.8 596.6 L549.6 594.6 L549.3 592.6 L549 590.6 L548.6 588.6 L548.3 586.5 L547.8 584.5 L547.3 582.5 L546.7 580.5 L546.2 578.5 L545.7 576.6 L545.2 574.6 L544.6 572.8 L543.9 570.9 L543.2 569.1 L542.5 567.3 L541.8 565.5 L541 563.9 L540.3 562.3 L539.5 560.7 L538.7 559.2 L537.9 557.8 L537.1 556.5 L536.3 555.3 L535.5 554.1 L534.6 553.1 L533.8 552.1 L532.9 551.3 L532.1 550.5 L531.3 549.8M563 601.3 L562.6 598.4 L562.3 595.6 L561.8 592.7 L561.4 589.8 L560.9 586.9 L560.3 584.1 L559.6 581.2 L558.8 578.3 L558 575.4 L557.3 572.6 L556.5 569.8 L555.7 567.1 L554.8 564.4 L553.8 561.8 L552.7 559.2 L551.7 556.6 L550.6 554.2 L549.5 551.8 L548.4 549.6 L547.3 547.4 L546.1 545.3 L544.9 543.4 L543.8 541.5 L542.5 539.8 L541.3 538.2 L540 536.7 L538.8 535.3 L537.6 534.1 L536.4 533.1 L535.1 532.1M577.2 604.4 L576.7 600.5 L576.2 596.6 L575.6 592.7 L575 588.7 L574.4 584.8 L573.6 580.8 L572.6 576.9 L571.6 572.9 L570.5 569 L569.5 565.2 L568.5 561.4 L567.4 557.6 L566.2 553.9 L564.8 550.3 L563.4 546.8 L562 543.3 L560.6 540 L559.1 536.8 L557.6 533.7 L556.1 530.7 L554.5 527.9 L552.9 525.2 L551.3 522.7 L549.7 520.3 L548 518.1 L546.3 516.1 L544.6 514.3 L543 512.7 L541.4 511.2 L539.7 509.8M592.8 607.4 L592.1 602.5 L591.5 597.5 L590.7 592.6 L590 587.6 L589.1 582.7 L588.1 577.7 L586.8 572.7 L585.5 567.8 L584.1 562.9 L582.8 558 L581.5 553.2 L580.1 548.6 L578.4 543.9 L576.7 539.4 L574.9 535 L573.1 530.7 L571.3 526.5 L569.4 522.5 L567.5 518.6 L565.5 514.9 L563.5 511.4 L561.5 508 L559.5 504.9 L557.4 502 L555.2 499.2 L553.1 496.7 L550.9 494.4 L548.8 492.4 L546.8 490.6 L544.7 488.9M609.1 610 L608.3 604.1 L607.5 598.1 L606.7 592.2 L605.7 586.2 L604.6 580.2 L603.4 574.2 L601.9 568.3 L600.2 562.3 L598.6 556.4 L597 550.6 L595.4 544.8 L593.7 539.2 L591.7 533.6 L589.6 528.2 L587.4 522.9 L585.2 517.7 L583 512.7 L580.7 507.9 L578.4 503.3 L576 498.8 L573.6 494.6 L571.2 490.6 L568.7 486.9 L566.2 483.4 L563.6 480.1 L561 477.1 L558.5 474.4 L555.9 472 L553.4 469.9 L550.9 467.8M626.3 612.4 L625.4 605.4 L624.5 598.4 L623.5 591.5 L622.4 584.5 L621.2 577.5 L619.8 570.5 L618.1 563.4 L616.2 556.4 L614.3 549.5 L612.5 542.7 L610.6 536 L608.7 529.4 L606.4 522.9 L603.9 516.5 L601.4 510.3 L598.9 504.2 L596.3 498.4 L593.7 492.7 L591 487.3 L588.3 482.1 L585.5 477.2 L582.7 472.6 L579.8 468.2 L576.9 464.1 L573.9 460.3 L570.9 456.8 L567.9 453.6 L565 450.9 L562 448.5 L559.1 446.1M644.8 614.9 L643.8 606.9 L642.8 599 L641.6 591 L640.4 583 L639 575.1 L637.3 567.1 L635.3 559.1 L633 551.1 L630.8 543.2 L628.7 535.5 L626.5 527.8 L624.2 520.3 L621.6 513 L618.7 505.7 L615.8 498.7 L612.8 491.8 L609.8 485.2 L606.8 478.8 L603.7 472.6 L600.5 466.8 L597.3 461.2 L594 456 L590.7 451 L587.3 446.4 L583.9 442.2 L580.4 438.2 L576.9 434.6 L573.5 431.5 L570.1 428.8 L566.7 426.1M664.3 617.2 L663.1 608.3 L662 599.4 L660.7 590.4 L659.3 581.5 L657.7 572.6 L655.8 563.6 L653.5 554.6 L650.9 545.6 L648.4 536.8 L646 528.1 L643.5 519.6 L640.9 511.2 L637.9 502.9 L634.6 494.8 L631.3 486.9 L628 479.3 L624.6 471.8 L621.1 464.6 L617.5 457.8 L613.9 451.3 L610.3 445.1 L606.6 439.2 L602.8 433.7 L599 428.6 L595.1 423.8 L591.1 419.4 L587.2 415.4 L583.3 412 L579.5 408.9 L575.6 405.9M684.6 619.2 L683.3 609.4 L682.1 599.5 L680.7 589.7 L679.1 579.8 L677.3 569.9 L675.3 560 L672.7 550.1 L669.8 540.2 L666.9 530.4 L664.2 520.8 L661.5 511.4 L658.6 502.1 L655.2 493 L651.5 484.1 L647.8 475.3 L644.1 466.9 L640.3 458.7 L636.4 450.8 L632.4 443.3 L628.4 436.1 L624.3 429.2 L620.2 422.8 L616 416.8 L611.7 411.2 L607.4 406 L602.9 401.1 L598.5 396.7 L594.2 393 L589.9 389.6 L585.6 386.3M705.9 621.5 L704.5 610.7 L703.1 599.9 L701.6 589.1 L699.8 578.2 L697.9 567.4 L695.6 556.5 L692.7 545.6 L689.5 534.7 L686.2 524 L683.3 513.5 L680.3 503.2 L677 493 L673.2 483.1 L669.2 473.2 L665.1 463.7 L660.9 454.4 L656.7 445.5 L652.3 436.8 L648 428.6 L643.5 420.7 L639 413.3 L634.4 406.3 L629.7 399.7 L625 393.5 L620.1 387.8 L615.2 382.5 L610.3 377.8 L605.5 373.7 L600.8 370 L596 366.5M527.1 592.2 L532.4 594 L537.9 595.8 L543.9 597.2 L550.1 598.5 L556.4 599.9 L563 601.3 L569.9 602.8 L577.2 604.4 L584.9 606 L592.8 607.4 L600.8 608.7 L609.1 610 L617.5 611.2 L626.3 612.4 L635.4 613.6 L644.8 614.9 L654.5 616.1 L664.3 617.2 L674.4 618.2 L684.6 619.2 L695.2 620.4 L705.9 621.5 L716.9 622.5 L728 623.7M527.1 592.2 L532.2 592.6 L537.5 592.9 L543.2 592.8 L549.3 592.6 L555.4 592.6 L561.8 592.7 L568.6 592.7 L575.6 592.7 L583.1 592.7 L590.7 592.6 L598.6 592.4 L606.7 592.2 L614.9 591.8 L623.5 591.5 L632.4 591.2 L641.6 591 L651.1 590.8 L660.7 590.4 L670.6 590.1 L680.7 589.7 L691 589.4 L701.6 589.1 L712.4 588.8 L723.3 588.6M527.1 592.2 L531.9 591.1 L536.9 589.9 L542.4 588.3 L548.3 586.5 L554.2 585.3 L560.3 584.1 L566.8 582.5 L573.6 580.8 L580.7 579.3 L588.1 577.7 L595.6 576 L603.4 574.2 L611.5 572.3 L619.8 570.5 L628.5 568.7 L637.3 567.1 L646.5 565.4 L655.8 563.6 L665.4 561.8 L675.3 560 L685.3 558.3 L695.6 556.5 L706.1 554.9 L716.8 553.3M527.1 592.2 L531.5 589.7 L536.1 587 L541.3 583.7 L546.7 580.5 L552.3 578 L558 575.4 L564.1 572.3 L570.5 569 L577.2 565.9 L584.1 562.9 L591.2 559.7 L598.6 556.4 L606.3 552.9 L614.3 549.5 L622.4 546.3 L630.8 543.2 L639.4 540 L648.4 536.8 L657.5 533.6 L666.9 530.4 L676.5 527.2 L686.2 524 L696.3 521 L706.5 518M527.1 592.2 L531.1 588.2 L535.3 584.1 L540.1 579.4 L545.2 574.6 L550.3 570.9 L555.7 567.1 L561.4 562.4 L567.4 557.6 L573.6 553.1 L580.1 548.6 L586.7 543.9 L593.7 539.2 L601 534.3 L608.7 529.4 L616.3 524.8 L624.2 520.3 L632.4 515.8 L640.9 511.2 L649.6 506.6 L658.6 502.1 L667.7 497.6 L677 493 L686.6 488.7 L696.3 484.5M527.1 592.2 L530.5 586.9 L534.2 581.4 L538.6 575.2 L543.2 569.1 L547.9 564.1 L552.7 559.2 L557.9 553.1 L563.4 546.8 L569 540.9 L574.9 535 L581 529 L587.4 522.9 L594.3 516.6 L601.4 510.3 L608.5 504.4 L615.8 498.7 L623.4 492.8 L631.3 486.9 L639.5 481.1 L647.8 475.3 L656.3 469.5 L665.1 463.7 L674.1 458.1 L683.2 452.7M527.1 592.2 L530 585.6 L533.1 578.8 L536.9 571.3 L541 563.9 L545.2 557.9 L549.5 551.8 L554.2 544.4 L559.1 536.8 L564.1 529.6 L569.4 522.5 L574.9 515.2 L580.7 507.9 L587.1 500.3 L593.7 492.7 L600.1 485.7 L606.8 478.8 L613.8 471.7 L621.1 464.6 L628.6 457.7 L636.4 450.8 L644.3 443.8 L652.3 436.8 L660.7 430.2 L669.2 423.7M527.1 592.2 L529.3 584.5 L531.9 576.6 L535.1 567.8 L538.7 559.2 L542.3 552.3 L546.1 545.3 L550.2 536.7 L554.5 527.9 L558.9 519.6 L563.5 511.4 L568.4 503 L573.6 494.6 L579.5 485.9 L585.5 477.2 L591.3 469.1 L597.3 461.2 L603.6 453.1 L610.3 445.1 L617.2 437.1 L624.3 429.2 L631.6 421.2 L639 413.3 L646.7 405.6 L654.6 398.2M527.1 592.2 L528.7 583.5 L530.6 574.6 L533.3 564.8 L536.3 555.3 L539.3 547.6 L542.5 539.8 L546 530.2 L549.7 520.3 L553.4 511.1 L557.4 502 L561.6 492.7 L566.2 483.4 L571.5 473.7 L576.9 464.1 L582 455.2 L587.3 446.4 L593 437.5 L599 428.6 L605.3 419.9 L611.7 411.2 L618.3 402.3 L625 393.5 L632 385.1 L639.2 376.9M527.1 592.2 L528 582.7 L529.3 573 L531.3 562.4 L533.8 552.1 L536.2 543.7 L538.8 535.3 L541.6 525 L544.6 514.3 L547.7 504.3 L550.9 494.4 L554.5 484.4 L558.5 474.4 L563.1 463.9 L567.9 453.6 L572.3 444 L576.9 434.6 L581.9 425 L587.2 415.4 L592.8 406.1 L598.5 396.7 L604.3 387.2 L610.3 377.8 L616.7 368.7 L623.1 359.9M527.1 592.2 L527.4 582.1 L528 571.9 L529.4 560.7 L531.3 549.8 L533.1 540.9 L535.1 532.1 L537.4 521.1 L539.7 509.8 L542.1 499.3 L544.7 488.9 L547.6 478.4 L550.9 467.8 L554.9 456.9 L559.1 446.1 L562.9 436 L566.7 426.1 L571 416 L575.6 405.9 L580.5 396.1 L585.6 386.3 L590.7 376.3 L596 366.5 L601.6 357 L607.4 347.7M502.1 542.6 L528 571.9M503.9 526.5 L531.3 549.8M506.7 506.9 L535.1 532.1M510.5 489 L539.7 509.8M515.8 468.5 L544.7 488.9M520.2 448.1 L550.9 467.8M527.4 427.3 L559.1 446.1M534.6 407.2 L566.7 426.1M542.7 386.6 L575.6 405.9M550.9 367 L585.6 386.3M561.5 347.4 L596 366.5M500.3 557.1 L527.5 582M537.9 595.8 L538.6 611.1M550.1 598.5 L550.9 615.4M563 601.3 L564 619.9M577.2 604.4 L578.3 624.4M592.8 607.4 L594 628.9M609.1 610 L610.6 633.6M626.3 612.4 L627.9 638.1M644.8 614.9 L646.7 642.5M664.3 617.2 L666.4 646.6M684.6 619.2 L686.9 650.3M705.9 621.5 L708.4 653.9M728 623.7 L730.5 656.5M527.1 592.2 L527.7 607.3M728 623.7 L727.4 619.2 L726.8 614.8 L726.3 610.5 L725.7 606.1 L725.2 601.7 L724.6 597.3 L724 592.9 L723.3 588.6 L722.6 584.2 L721.9 579.8 L721.1 575.4 L720.4 570.9 L719.6 566.5 L718.7 562.1 L717.8 557.7 L716.8 553.3 L715.6 548.9 L714.4 544.5 L713.2 540 L711.8 535.6 L710.5 531.1 L709.1 526.7 L707.8 522.4 L706.5 518 L705.2 513.7 L704 509.5 L702.8 505.3 L701.6 501.1 L700.4 496.9 L699.1 492.7 L697.8 488.6 L696.3 484.5 L694.9 480.4 L693.3 476.4 L691.7 472.3 L690 468.3 L688.3 464.4 L686.6 460.4 L684.9 456.6 L683.2 452.7 L681.5 448.9 L679.8 445.2 L678.1 441.5 L676.3 437.8 L674.6 434.2 L672.8 430.6 L671 427.1 L669.2 423.7 L667.5 420.3 L665.6 416.9 L663.8 413.6 L662 410.4 L660.2 407.3 L658.3 404.2 L656.4 401.1 L654.6 398.2 L652.7 395.3 L650.8 392.5 L648.9 389.7 L647 387 L645 384.4 L643.1 381.8 L641.2 379.3 L639.2 376.9 L637.2 374.5 L635.2 372.2 L633.2 370 L631.2 367.8 L629.2 365.7 L627.1 363.7 L625.1 361.7 L623.1 359.9 L621.1 358.1 L619.2 356.5 L617.2 355 L615.2 353.5 L613.2 352.1 L611.3 350.6 L609.3 349.2 L607.4 347.7M570.7 329.4 L607.4 347.7" fill="none" stroke="#000" stroke-width="1"/><polygon points="1284,337.5 1290.8,334.2 1298.8,336.8 1306.9,339.4 1315,342 1322.7,344.5 1330,346.7 1336.6,348.5 1342.7,350.1 1348.4,351.5 1354.1,353.1 1360,355 1366,357.3 1372,359.7 1378,362.4 1384,365.2 1390,368.3 1396.1,371.6 1402.3,375.2 1408.5,379 1414.4,382.8 1420,386.7 1425.1,390.5 1429.7,394.3 1434.2,398.1 1438.6,402.3 1443.3,406.7 1448.3,411.6 1453.5,416.9 1458.7,422.5 1463.7,428 1468.3,433.3 1472.5,438.4 1476.4,443.5 1480,448.5 1483.4,453.4 1486.7,458.3 1489.7,463 1492.4,467.5 1495,471.9 1497.6,476.5 1500.5,481.5 1503.8,486.7 1507.3,492 1510.9,497.5 1514.3,503.5 1517.5,510 1520.4,517.3 1523.1,525.2 1525.7,533.4 1528,541.8 1530,550 1531.7,558 1533.1,566 1534.4,574 1535.4,582 1536.3,590 1537.1,598.1 1537.8,606.4 1538.3,614.6 1538.6,622.5 1538.8,630 1538.7,637.2 1538.3,644.3 1537.8,650.9 1537.3,656.9 1536.8,662 1536.4,665.9 1536.1,668.7 1535.7,671 1535.4,673.1 1535,675.5 1511.3,685 1511.3,685 1511.5,684.1 1511.7,683.7 1511.9,683 1512.2,681.2 1512.5,677.5 1513,671.2 1513.6,662.9 1514.3,653.5 1514.8,643.9 1515,635 1514.9,626.9 1514.7,619.1 1514.3,611.2 1513.6,603.3 1512.5,595 1511,586.1 1509.2,576.8 1507,567.3 1504.8,558.3 1502.5,550 1500.2,542.6 1497.8,535.9 1495.2,529.7 1492.6,523.6 1490,517.5 1487.1,511.1 1484,504.7 1481,498.4 1478.1,492.9 1475.8,488.3 1474.2,485.2 1473.2,483.4 1472.5,482.1 1471.5,480.6 1470,478.3 1467.9,475 1465.4,471.1 1462.6,466.9 1459.7,462.6 1456.7,458.3 1453.6,454.1 1450.4,449.8 1447.1,445.4 1443.6,441.1 1440,436.7 1436.3,432.4 1432.5,428 1428.5,423.7 1424.4,419.3 1420,415 1415.3,410.6 1410.4,406.1 1405.2,401.7 1400.1,397.4 1395,393.3 1390.1,389.5 1385.2,385.9 1380.4,382.4 1375.3,379.1 1370,375.8 1364.3,372.5 1358.4,369.3 1352.3,366.3 1346.1,363.4 1340,360.8 1333.9,358.6 1327.7,356.7 1321.6,355.1 1315.4,353.4 1309.2,351.7 1284,355" fill="url(#gRE)" stroke="#000" stroke-width="1.3"/><polygon points="1500.8,481.7 1500.5,481.5 1503.8,486.7 1507.3,492 1510.9,497.5 1514.3,503.5 1517.5,510 1520.4,517.3 1523.1,525.2 1525.7,533.4 1528,541.8 1530,550 1531.7,558 1533.1,566 1534.4,574 1535.4,582 1536.3,590 1537.1,598.1 1537.8,606.4 1538.3,614.6 1538.6,622.5 1538.8,630 1538.7,637.2 1538.3,644.3 1537.8,650.9 1537.3,656.9 1536.8,662 1536.4,665.9 1536.1,668.7 1535.7,671 1535.4,673.1 1535,675.5 1511.3,685 1511.3,685 1511.5,684.1 1511.7,683.7 1511.9,683 1512.2,681.2 1512.5,677.5 1513,671.2 1513.6,662.9 1514.3,653.5 1514.8,643.9 1515,635 1514.9,626.9 1514.7,619.1 1514.3,611.2 1513.6,603.3 1512.5,595 1511,586.1 1509.2,576.8 1507,567.3 1504.8,558.3 1502.5,550 1500.2,542.6 1497.8,535.9 1495.2,529.7 1492.6,523.6 1490,517.5 1487.1,511.1 1484,504.7 1481,498.4 1478.1,492.9 1475.8,488.3 1475.8,488.3" fill="#ff0000" stroke="#000" stroke-width="1.2"/><polygon points="1309.2,351.7 1315.4,353.4 1321.6,355.1 1327.7,356.7 1333.9,358.6 1340,360.8 1346.1,363.4 1352.3,366.3 1358.4,369.3 1364.3,372.5 1370,375.8 1375.3,379.1 1380.4,382.4 1385.2,385.9 1390.1,389.5 1395,393.3 1400.1,397.4 1405.2,401.7 1410.4,406.1 1415.3,410.6 1420,415 1424.4,419.3 1428.5,423.7 1432.5,428 1436.3,432.4 1440,436.7 1443.6,441.1 1447.1,445.4 1450.4,449.8 1453.6,454.1 1456.7,458.3 1459.7,462.6 1462.6,466.9 1465.4,471.1 1467.9,475 1470,478.3 1471.5,480.6 1472.5,482.1 1473.2,483.4 1474.2,485.2 1475.8,488.3 1475.8,488.3 1465,560 1448.8,663.8 1429.5,659.3 1300,500 1300,400" fill="#aa0000" stroke="#000" stroke-width="1"/><polygon points="1475.8,488.3 1475.8,488.3 1478.1,492.9 1481,498.4 1484,504.7 1487.1,511.1 1490,517.5 1492.6,523.6 1495.2,529.7 1497.8,535.9 1500.2,542.6 1502.5,550 1504.8,558.3 1507,567.3 1509.2,576.8 1511,586.1 1512.5,595 1513.6,603.3 1514.3,611.2 1514.7,619.1 1514.9,626.9 1515,635 1514.8,643.9 1514.3,653.5 1513.6,662.9 1513,671.2 1512.5,677.5 1512.2,681.2 1511.9,683 1511.7,683.7 1511.5,684.1 1511.3,685 1511.3,685 1448.8,663.8 1465,560" fill="#d40000" stroke="#000" stroke-width="1.6"/><polyline points="1300.8,445 1475.8,488.3" fill="none" stroke="#000" stroke-width="1"/><polyline points="1440.8,479.2 1428.8,557.5" fill="none" stroke="#000" stroke-width="1"/><polygon points="850,440 855.8,441.7 925.8,425.8 1062.5,399.2 1107.5,390.8 1175,375.8 1240,364.2 1309.2,351.7 1305,386.7 1300.8,420 1299.2,436.7 1300.8,445 1305,472.5 1312.5,502.5 1320,517.5 1332.5,527.5 1428.8,557.5 1438,563 1441.5,575 1429.5,659.3 1105,788 1100,830 1000,600" fill="#1f1f1f" stroke="#000" stroke-width="1.5"/><polygon points="1040,615 1056.3,610 1135,586.3 1231.3,624.5 1081.3,675.5 1060,660" fill="#141414" stroke="none"/><polygon points="1252.5,550 1299.5,536.3 1332.5,527.5 1428.8,557.5 1435,562.5 1262,618 1259,600" fill="#141414" stroke="none"/><polygon points="1081.3,675.5 1435,562.5 1440,570 1440,584.3 1092.5,708.8" fill="url(#gRO)" stroke="none"/><polygon points="1020,583 1040,577.5 1116.3,557.5 1135,586.3 1056.3,610 1035,617" fill="url(#gLB)" stroke="none"/><polygon points="1242.5,520 1310,501.3 1320,517.5 1332.5,527.5 1252.5,550" fill="url(#gLB2)" stroke="none"/><path d="M997.5 410 L992.5 506.3M1092.5 395 L1086.7 488.3M1233.3 365.8 L1224.2 455M985 508.2 L1100.8 482.5M990 514 L1101.7 488.3M995 524 L1103.3 496.7M1210 455 L1298.3 434.2M1212.5 460 L1298.3 439.2M1215.8 465.8 L1299.2 444.2M1030 580 L1040 577.5 L1116.3 557.5M1045 613 L1056.3 610 L1135 586.3M1126.3 590 L1231.3 626.3M1242.5 520 L1310 501.3M1252.5 550 L1332.5 527.5M1075 677.5 L1081.3 675.5 L1435 562.5M1088 710.5 L1092.5 708.8 L1440 584.3" fill="none" stroke="#000" stroke-width="0.9" stroke-opacity="0.85"/><polygon points="1110,392.5 1135.8,385.8 1140.6,388.8 1145.4,391.6 1150.1,394.6 1155,397.8 1160,401.7 1165.3,406.3 1170.8,411.6 1176.4,417.1 1181.7,422.8 1186.7,428.3 1191.2,433.6 1195.3,438.9 1199.3,444.2 1203,449.6 1206.7,455 1210.3,460.5 1213.7,466 1216.9,471.7 1220.1,477.4 1223.3,483.3 1226.5,489.4 1229.7,495.8 1232.8,502.3 1235.7,508.7 1238.3,515 1240.6,521 1242.6,526.9 1244.5,532.7 1246.3,538.7 1248,545 1249.8,551.7 1251.5,558.8 1253.2,565.9 1254.7,573.1 1256,580 1257.1,586.7 1257.9,593.2 1258.6,599.6 1259.3,606 1260,612.5 1231.3,624.5 1231.3,624.5 1230.7,617.5 1230.2,610.5 1229.7,603.5 1229,596.6 1228,590 1226.7,583.6 1225.2,577.4 1223.6,571.4 1221.8,565.6 1220,560 1218.2,554.8 1216.2,550 1214.2,545.2 1212.1,540.3 1210,535 1207.8,529 1205.5,522.5 1203.2,515.8 1200.8,509.3 1198.3,503.3 1195.8,498 1193.3,493.1 1190.8,488.5 1188,483.6 1185,478.3 1181.8,472.4 1178.4,466.1 1174.9,459.7 1171,453.1 1166.7,446.7 1162,440.2 1156.8,433.6 1151.3,427 1145.7,420.8 1140,415 1134.2,409.9 1128.2,405.3 1122.2,401.1 1116.1,396.9 1110,392.5" fill="url(#gAB)" stroke="#000" stroke-width="1.3"/><polygon points="1107.5,391.7 1106.9,399.2 1106.2,406.3 1105.6,414.1 1105,423.3 1104.3,435.1 1103.5,448.7 1102.8,462.1 1102.5,473.3 1102.6,481.3 1102.9,487.3 1103.5,492.5 1104.2,498.3 1105,504.7 1106,511.2 1107.1,517.9 1108.5,525 1110.2,533.1 1112.1,541.9 1114.2,550.4 1116.3,557.5 1118.3,562.8 1120.4,567 1122.5,570.5 1125,574 1127.9,577.4 1131,580.4 1134.3,583.3 1137.5,586.3 1231.3,624.5 1231.3,624.5 1230.7,617.5 1230.2,610.5 1229.7,603.5 1229,596.6 1228,590 1226.7,583.6 1225.2,577.4 1223.6,571.4 1221.8,565.6 1220,560 1218.2,554.8 1216.2,550 1214.2,545.2 1212.1,540.3 1210,535 1207.8,529 1205.5,522.5 1203.2,515.8 1200.8,509.3 1198.3,503.3 1195.8,498 1193.3,493.1 1190.8,488.5 1188,483.6 1185,478.3 1181.8,472.4 1178.4,466.1 1174.9,459.7 1171,453.1 1166.7,446.7 1162,440.2 1156.8,433.6 1151.3,427 1145.7,420.8 1140,415 1134.2,409.9 1128.2,405.3 1122.2,401.1 1116.1,396.9 1110,392.5" fill="#aa0000" stroke="#000" stroke-width="1"/><polygon points="818.3,425 889.2,414.2 1061.7,379.2 1140,366.7 1284.7,337.5 1290.8,334.2 1330,346.7 1309.2,351.7 1240,364.2 1175,375.8 1107.5,390.8 1062.5,399.2 925.8,425.8 855.8,441.7" fill="#b40000" stroke="#000" stroke-width="1.2"/><polygon points="912.5,284.5 952.5,293 927,426.2 889.2,414.2" fill="#e00000" stroke="#000" stroke-width="1.6"/><polyline points="939.5,291.5 914.5,422.5" fill="none" stroke="#000" stroke-width="0.9"/><polygon points="952.5,293 1051,279.8 1062,399.3 927,426.2" fill="#1f1f1f" stroke="#000" stroke-width="1.6"/><polyline points="1002.5,286.5 997.5,411" fill="none" stroke="#000" stroke-width="0.8"/><polygon points="912.5,284.5 995,270.5 1051,279.8 952.5,293" fill="#ba0000" stroke="#000" stroke-width="1.3"/><polyline points="964.3,290.2 1031.3,280.8" fill="none" stroke="#fff" stroke-width="0.9" stroke-dasharray="3 7" stroke-opacity="0.9"/><polygon points="1162.5,250 1205,258.3 1180,375.5 1138.5,366.5" fill="#e00000" stroke="#000" stroke-width="1.6"/><polyline points="1191,256 1166,371.5" fill="none" stroke="#000" stroke-width="0.9"/><polygon points="1205,258.3 1282.3,247.5 1284.5,355.5 1180,375.5" fill="#1f1f1f" stroke="#000" stroke-width="1.6"/><polyline points="1243.8,253.5 1232.5,366" fill="none" stroke="#000" stroke-width="0.8"/><polygon points="1162.5,250 1236,240.5 1282.3,247.5 1205,258.3" fill="#ba0000" stroke="#000" stroke-width="1.3"/><polyline points="1214.3,255.8 1266.8,248.1" fill="none" stroke="#fff" stroke-width="0.9" stroke-dasharray="3 7" stroke-opacity="0.9"/><polygon points="855.8,441.7 893.3,435 897.6,436.8 901.8,438.6 906.1,440.4 910.4,442.4 915,444.5 919.6,446.6 924.3,448.8 929.1,451.1 934.3,453.9 940,457.5 946.4,462 953.5,467.1 960.9,472.8 968.2,478.8 975,485 981.4,491.4 987.5,498 993.4,504.9 999.2,512.2 1005,520 1010.7,528.3 1016.4,537 1022,546.2 1027.4,555.5 1032.5,565 1037.4,574.8 1042.2,585.1 1046.8,595.5 1051.1,605.6 1055,615 1058.5,623.9 1061.7,632.4 1064.6,640.6 1067.4,648.1 1070,655 1072.5,660.9 1074.8,665.9 1077,670.4 1079.1,675 1081.3,680 1083.6,685.4 1086,691 1088.3,696.7 1090.5,702.7 1092.5,709 1094.3,715.6 1095.9,722.6 1097.4,729.8 1098.7,737.2 1100,745 1101.2,752.6 1102.4,760.1 1103.4,768.1 1104.3,777.1 1105,788 1105.5,801.2 1105.7,816.2 1105.8,832.3 1105.9,848.7 1106,864.5 1068.8,879.7 1068.8,837.3 1068.8,837.3 1068.1,828.1 1067.5,818.9 1066.8,809.8 1066,800.6 1065,791.3 1063.8,782 1062.6,772.7 1061.1,763.3 1059.5,753.9 1057.5,744.5 1055.1,735 1052.4,725.5 1049.5,715.9 1046.5,706.4 1043.5,697 1040.7,687.7 1037.8,678.5 1034.9,669.4 1031.9,660.3 1028.5,651.3 1024.8,642.4 1020.8,633.5 1016.6,624.6 1012.3,615.9 1008,607.4 1003.6,599 999.2,590.7 994.6,582.5 990,574.5 985.3,566.7 980.5,559.1 975.7,551.6 970.8,544.4 965.8,537.3 960.8,530.5 955.7,523.9 950.6,517.5 945.4,511.4 940.1,505.4 934.8,499.7 929.4,494.2 923.9,488.9 918.4,483.8 912.9,479 907.5,474.5 902.1,470.3 896.8,466.6 891.5,463 886.1,459.4 880.8,455.8" fill="url(#gDB)" stroke="#000" stroke-width="1.5"/><polyline points="1020.4,631 1057,618.8" fill="none" stroke="#000" stroke-width="1"/><polygon points="762.3,768 762.3,787 764.5,788 766.7,788.9 768.8,789.9 771,790.8 773.2,791.8 775.4,792.7 777.7,793.7 780,794.8 782.4,795.8 784.8,796.9 787.2,797.9 789.7,799 792.2,800.1 794.7,801.2 797.2,802.3 799.7,803.4 802.2,804.5 804.8,805.6 807.3,806.7 809.9,807.8 812.5,808.9 815.1,810 817.7,811.1 820.4,812.2 823.1,813.3 825.9,814.4 828.6,815.5 831.4,816.6 834.2,817.7 837.1,818.9 840,820 842.9,821.1 845.9,822.2 848.8,823.3 851.9,824.4 854.9,825.5 858,826.7 861.1,827.8 864.2,828.9 867.3,830 870.4,831.1 873.5,832.2 876.7,833.3 879.8,834.4 883,835.5 886.2,836.6 889.4,837.7 892.6,838.8 895.8,839.9 899.1,841 902.3,842.1 905.6,843.1 908.9,844.2 912.2,845.2 915.5,846.3 918.9,847.3 922.3,848.3 925.8,849.4 929.3,850.4 932.8,851.4 936.3,852.4 939.9,853.4 943.4,854.4 947,855.4 950.6,856.4 954.2,857.4 957.8,858.3 961.4,859.2 965.1,860.2 968.7,861.1 972.4,862 976.1,862.9 979.8,863.8 983.5,864.6 987.2,865.5 991,866.3 994.7,867.1 998.5,867.9 1002.3,868.7 1006.1,869.5 1009.9,870.3 1013.8,871 1017.6,871.8 1021.5,872.6 1025.4,873.3 1029.3,874 1033.2,874.8 1037.1,875.5 1041,876.2 1045,876.8 1048.9,877.4 1052.9,877.9 1056.9,878.4 1060.9,878.8 1064.8,879.2 1068.8,879.7 1068.8,837.3 1068.4,831.6 1067.9,825.8 1067.5,820.1 1067.1,814.3 1066.7,808.6 1066.2,802.9 1065.7,797.1 1065,791.3 1064.3,785.5 1063.5,779.7 1062.7,773.8 1061.9,768 1061,762.1 1059.9,756.3 1058.8,750.4 1057.5,744.5 1056.1,738.6 1054.5,732.6 1052.8,726.7 1051,720.7 1049.1,714.7 1047.2,708.8 1045.3,702.9 1043.5,697 1041.7,691.2 1039.9,685.4 1038.2,679.7 1036.4,673.9 1034.6,668.2 1032.7,662.6 1030.6,656.9 1028.5,651.3 1026.2,645.7 1023.8,640.1 1021.3,634.6 1018.7,629 1016.1,623.5 1013.4,618.1 1010.7,612.7 1008,607.4 1005.3,602.1 1002.5,596.9 999.7,591.7 996.9,586.6 994,581.5 991.2,576.5 988.2,571.6 985.3,566.7 982.3,561.9 979.3,557.2 976.3,552.6 973.3,548 970.2,543.5 967.1,539.1 963.9,534.7 960.8,530.5 957.6,526.4 954.4,522.3 951.2,518.3 948,514.4 944.7,510.6 941.4,506.9 938.1,503.2 934.8,499.7 931.4,496.2 928.1,492.9 924.6,489.6 921.2,486.3 917.8,483.2 914.3,480.2 910.9,477.3 907.5,474.5 904.1,471.9 900.8,469.4 897.4,467 894.1,464.7 890.8,462.5 887.5,460.3 884.1,458.1 880.8,455.8 818.3,425 818.3,425 816.4,429 814.5,433 812.7,437 810.8,441 808.8,445.1 806.7,449.2 804.4,453.4 802,457.7 799.6,462 797.1,466.3 794.7,470.7 792.5,475 790.5,479.3 788.7,483.6 786.9,487.8 785.2,492.1 783.5,496.4 781.7,500.8 779.9,505.2 778,509.7 776.2,514.1 774.4,518.6 772.6,523.1 770.8,527.5 769.1,531.9 767.4,536.2 765.7,540.5 764.1,544.8 762.5,549.1 760.8,553.3 759.1,557.5 757.3,561.6 755.6,565.8 753.9,569.9 752.3,574.1 750.8,578.3 749.6,582.4 748.7,586.3 747.9,590.2 747,594.4 745.9,599.1 744.5,604.5 742.6,610.8 740.4,617.8 738,625.3 735.5,633.2 733.2,641.1 731.1,649 729.3,657.1 727.6,665.6 726.1,674.3 724.6,682.7 723.3,690.7 722.2,697.9 721.2,704.2 720.5,709.7 719.9,714.8 719.4,719.6 718.8,724.4 718.2,729.5" fill="#fb0000" stroke="#000" stroke-width="0.8" stroke-linejoin="round"/><polygon points="718.2,729.5 718.8,724.4 719.4,719.6 719.9,714.8 720.5,709.7 721.2,704.2 722.2,697.9 723.3,690.7 724.6,682.7 726.1,674.3 727.6,665.6 729.3,657.1 731.1,649 733.2,641.1 735.5,633.2 738,625.3 740.4,617.8 742.6,610.8 744.5,604.5 745.9,599.1 747,594.4 747.9,590.2 748.7,586.3 749.6,582.4 750.8,578.3 752.3,574.1 753.9,569.9 755.6,565.8 757.3,561.6 759.1,557.5 760.8,553.3 762.5,549.1 764.1,544.8 765.7,540.5 767.4,536.2 769.1,531.9 770.8,527.5 772.6,523.1 774.4,518.6 776.2,514.1 778,509.7 779.9,505.2 781.7,500.8 783.5,496.4 785.2,492.1 786.9,487.8 788.7,483.6 790.5,479.3 792.5,475 794.7,470.7 797.1,466.3 799.6,462 802,457.7 804.4,453.4 806.7,449.2 808.8,445.1 810.8,441 812.7,437 814.5,433 816.4,429 818.3,425 818.3,425 880.8,455.8 878.9,459 877,462.1 875.1,465.3 873.2,468.5 871.3,471.6 869.5,474.8 867.6,478.1 865.8,481.3 864,484.6 862.3,487.9 860.5,491.3 858.8,494.6 857.1,498 855.4,501.4 853.7,504.7 852,508 850.3,511.3 848.5,514.5 846.8,517.7 845.1,520.9 843.3,524.1 841.6,527.3 840,530.6 838.3,533.8 836.7,537.1 835.1,540.3 833.4,543.6 831.9,546.9 830.3,550.2 828.8,553.5 827.3,556.7 825.8,560 824.4,563.2 823,566.4 821.7,569.6 820.4,572.8 819.1,576 817.8,579.2 816.4,582.5 815,585.8 813.5,589.2 812,592.6 810.4,596.1 808.8,599.5 807.2,603 805.7,606.5 804.2,610 802.8,613.4 801.5,616.8 800.2,620.1 799,623.5 797.8,626.8 796.7,630.1 795.6,633.4 794.5,636.7 793.4,640 792.3,643.3 791.3,646.6 790.3,649.8 789.4,653.1 788.4,656.3 787.5,659.6 786.6,662.9 785.6,666.3 784.6,669.7 783.7,673.3 782.7,676.8 781.7,680.4 780.8,684 779.8,687.5 778.9,690.8 778,694 777.1,697 776.2,699.7 775.4,702.3 774.5,704.9 773.7,707.4 772.8,710 772,712.8 771.2,715.7 770.4,718.8 769.5,722.1 768.7,725.6 767.8,729 767,732.5 766.3,736 765.6,739.5 765,742.8 764.5,746 764.1,749.2 763.7,752.4 763.4,755.5 763.2,758.6 762.9,761.7 762.6,764.9 762.3,768" fill="#e20000" stroke="none"/><polygon points="820.4,788.8 819.8,783.3 819.2,777.8 818.3,772.2 817.2,766.5 815.7,760.8 814.1,755 812.5,749.4 810.7,743.9 808.6,738.5 806.2,733.1 803.8,727.9 801.2,723 798.6,718.3 795.9,713.8 793,709.6 790.1,705.8 787.1,702.3 784,699.1 781,696.5 778,694 778,694 781.7,680.4 785.6,666.3 789.4,653.1 793.4,640 797.8,626.8 802.8,613.4 808.8,599.5 815,585.8 820.4,572.8 825.8,560 831.9,546.9 838.3,533.8 845.1,520.9 852,508 858.8,494.6 865.8,481.3 865.8,481.3 877.9,489.7 890.1,498.8 902.6,509.9 915,522.3 927,536 938.6,550.9 950,567.1 960.9,584.5 971.4,602.8 981.5,622.1 991.3,642.1 1000.2,662.6 1007.3,683.4 1013.8,704.7 1020.6,726.5 1026.6,748.4 1030.6,770 1033.5,791.5 1035.5,812.7 1037.1,833.8 1037.1,833.8 1021.5,831.8 1006.1,829.7 991,827.6 976.1,825.4 961.4,822.9 947,820.3 932.8,817.5 918.9,814.7 905.6,811.9 892.6,809 879.8,806 867.3,802.8 854.9,799.4 842.9,795.9 831.4,792.3 820.4,788.8" fill="url(#yelF)" stroke="none"/><polyline points="1026,639.2 1023.5,633.6 1020.9,628 1018.2,622.5 1015.6,617 1012.8,611.6 1010.1,606.3 1007.4,601 1004.6,595.8 1001.8,590.6 999,585.4 996.1,580.3 993.2,575.3 990.3,570.3 987.3,565.4 984.4,560.6 981.4,555.9 978.3,551.2 975.2,546.6 972.1,542.1 969,537.7 965.9,533.3 962.7,529.1 959.5,524.9 956.3,520.8 953.1,516.8 949.8,512.9 946.5,509 943.2,505.3 939.9,501.6 936.5,498 933.2,494.6 929.7,491.1 926.3,487.8 922.8,484.6 919.3,481.4 915.9,478.4 912.4,475.5 909,472.6 905.6,469.9 902.2,467.4 898.8,465 895.5,462.8 892.1,460.5 888.8,458.3 885.5,456.1" fill="none" stroke="#000" stroke-width="0.7"/><polyline points="818.3,425 818.3,425 816.4,429 814.5,433 812.7,437 810.8,441 808.8,445.1 806.7,449.2 804.4,453.4 802,457.7 799.6,462 797.1,466.3 794.7,470.7 792.5,475 790.5,479.3 788.7,483.6 786.9,487.8 785.2,492.1 783.5,496.4 781.7,500.8 779.9,505.2 778,509.7 776.2,514.1 774.4,518.6 772.6,523.1 770.8,527.5 769.1,531.9 767.4,536.2 765.7,540.5 764.1,544.8 762.5,549.1 760.8,553.3 759.1,557.5 757.3,561.6 755.6,565.8 753.9,569.9 752.3,574.1 750.8,578.3 749.6,582.4 748.7,586.3 747.9,590.2 747,594.4 745.9,599.1 744.5,604.5 742.6,610.8 740.4,617.8 738,625.3 735.5,633.2 733.2,641.1 731.1,649 729.3,657.1 727.6,665.6 726.1,674.3 724.6,682.7 723.3,690.7 722.2,697.9 721.2,704.2 720.5,709.7 719.9,714.8 719.4,719.6 718.8,724.4 718.2,729.5 762.3,768 762.3,787 764.5,788 766.7,788.9 768.8,789.9 771,790.8 773.2,791.8 775.4,792.7 777.7,793.7 780,794.8 782.4,795.8 784.8,796.9 787.2,797.9 789.7,799 792.2,800.1 794.7,801.2 797.2,802.3 799.7,803.4 802.2,804.5 804.8,805.6 807.3,806.7 809.9,807.8 812.5,808.9 815.1,810 817.7,811.1 820.4,812.2 823.1,813.3 825.9,814.4 828.6,815.5 831.4,816.6 834.2,817.7 837.1,818.9 840,820 842.9,821.1 845.9,822.2 848.8,823.3 851.9,824.4 854.9,825.5 858,826.7 861.1,827.8 864.2,828.9 867.3,830 870.4,831.1 873.5,832.2 876.7,833.3 879.8,834.4 883,835.5 886.2,836.6 889.4,837.7 892.6,838.8 895.8,839.9 899.1,841 902.3,842.1 905.6,843.1 908.9,844.2 912.2,845.2 915.5,846.3 918.9,847.3 922.3,848.3 925.8,849.4 929.3,850.4 932.8,851.4 936.3,852.4 939.9,853.4 943.4,854.4 947,855.4 950.6,856.4 954.2,857.4 957.8,858.3 961.4,859.2 965.1,860.2 968.7,861.1 972.4,862 976.1,862.9 979.8,863.8 983.5,864.6 987.2,865.5 991,866.3 994.7,867.1 998.5,867.9 1002.3,868.7 1006.1,869.5 1009.9,870.3 1013.8,871 1017.6,871.8 1021.5,872.6 1025.4,873.3 1029.3,874 1033.2,874.8 1037.1,875.5 1041,876.2 1045,876.8 1048.9,877.4 1052.9,877.9 1056.9,878.4 1060.9,878.8 1064.8,879.2 1068.8,879.7" fill="none" stroke="#000" stroke-width="1.9" stroke-linejoin="round" stroke-linecap="round"/><path d="M780 775.6 L779.8 774.3 L779.6 773.1 L779.4 771.8 L779.2 770.6 L779 769.3 L778.7 768 L778.3 766.7 L777.9 765.4 L777.5 764.1 L777.2 762.8 L776.8 761.5 L776.3 760.2 L775.9 759 L775.3 757.7 L774.8 756.5 L774.2 755.3 L773.6 754.1 L773.1 753 L772.4 751.9 L771.8 750.8 L771.2 749.8 L770.5 748.8 L769.9 747.9 L769.2 747 L768.5 746.2 L767.8 745.4 L767.1 744.6 L766.4 744 L765.7 743.4 L765 742.8M799.7 782.2 L799.4 779.7 L799.1 777.1 L798.8 774.5 L798.4 771.9 L798 769.3 L797.5 766.7 L796.9 764 L796.1 761.4 L795.4 758.7 L794.7 756.1 L794 753.5 L793.2 750.9 L792.3 748.4 L791.2 745.8 L790.2 743.3 L789.1 740.9 L788 738.5 L786.9 736.2 L785.7 734 L784.5 731.8 L783.3 729.7 L782 727.7 L780.7 725.8 L779.4 724.1 L778 722.4 L776.7 720.8 L775.3 719.3 L773.9 718 L772.6 716.9 L771.2 715.7M820.4 788.8 L820 785.1 L819.6 781.5 L819.2 777.8 L818.6 774 L818 770.3 L817.2 766.5 L816.3 762.7 L815.2 758.9 L814.1 755 L813 751.3 L811.9 747.6 L810.7 743.9 L809.3 740.3 L807.8 736.7 L806.2 733.1 L804.6 729.7 L803 726.3 L801.2 723 L799.5 719.8 L797.7 716.7 L795.9 713.8 L794 711 L792.1 708.3 L790.1 705.8 L788.1 703.4 L786 701.2 L784 699.1 L782 697.3 L780 695.6 L778 694M842.9 795.9 L842.4 790.9 L841.9 785.8 L841.3 780.8 L840.6 775.7 L839.8 770.5 L838.8 765.4 L837.5 760.1 L836 754.9 L834.5 749.7 L833.1 744.6 L831.6 739.5 L830 734.4 L828.1 729.5 L826.1 724.5 L823.9 719.7 L821.8 714.9 L819.5 710.3 L817.2 705.8 L814.8 701.5 L812.4 697.3 L809.9 693.2 L807.3 689.4 L804.7 685.8 L802 682.4 L799.3 679.1 L796.5 676.1 L793.8 673.3 L791 670.8 L788.3 668.5 L785.6 666.3M867.3 802.8 L866.7 796.5 L866 790.1 L865.3 783.7 L864.3 777.3 L863.3 770.8 L862 764.3 L860.3 757.7 L858.4 751.1 L856.5 744.5 L854.6 738.1 L852.7 731.7 L850.6 725.4 L848.2 719.1 L845.5 712.9 L842.7 706.8 L839.9 700.8 L837 695 L834 689.4 L830.9 683.9 L827.8 678.7 L824.6 673.7 L821.3 668.9 L817.9 664.4 L814.5 660.1 L811 656 L807.4 652.2 L803.9 648.7 L800.4 645.6 L796.9 642.8 L793.4 640M892.6 809 L891.8 801.4 L891.1 793.7 L890.2 786 L889.1 778.2 L887.9 770.4 L886.3 762.6 L884.3 754.6 L882 746.6 L879.6 738.7 L877.3 731 L875 723.3 L872.5 715.7 L869.5 708.1 L866.2 700.6 L862.9 693.3 L859.4 686.2 L855.9 679.2 L852.2 672.4 L848.5 665.9 L844.6 659.6 L840.7 653.6 L836.7 647.9 L832.6 642.4 L828.5 637.3 L824.2 632.5 L819.8 627.9 L815.5 623.7 L811.3 620 L807 616.7 L802.8 613.4M918.9 814.7 L918.1 805.7 L917.3 796.7 L916.4 787.7 L915.2 778.6 L913.8 769.4 L912 760.2 L909.7 750.9 L907.1 741.5 L904.4 732.2 L901.8 723.1 L899.1 714.1 L896.2 705.1 L892.7 696.3 L888.9 687.5 L885 679 L881 670.6 L876.9 662.4 L872.6 654.5 L868.3 646.8 L863.8 639.5 L859.2 632.5 L854.6 625.8 L849.8 619.5 L844.9 613.5 L840 607.9 L834.9 602.6 L829.8 597.7 L824.9 593.5 L819.9 589.6 L815 585.8M947 820.3 L946.1 810 L945.2 799.8 L944.1 789.4 L942.7 779 L941.1 768.6 L939 758 L936.3 747.4 L933.2 736.7 L930 726.1 L927 715.7 L923.9 705.4 L920.4 695.2 L916.4 685.2 L911.9 675.2 L907.4 665.4 L902.7 655.9 L897.8 646.6 L892.9 637.6 L887.8 629 L882.6 620.6 L877.2 612.7 L871.8 605.1 L866.2 598 L860.6 591.2 L854.8 584.9 L848.9 578.9 L843 573.4 L837.3 568.6 L831.5 564.3 L825.8 560M976.1 825.4 L975.1 813.9 L974.2 802.3 L972.9 790.7 L971.4 779 L969.6 767.2 L967.2 755.3 L964.2 743.4 L960.6 731.4 L957 719.5 L953.5 707.8 L950 696.2 L946 684.8 L941.4 673.5 L936.4 662.3 L931.1 651.4 L925.8 640.7 L920.3 630.3 L914.6 620.2 L908.8 610.6 L902.9 601.2 L896.8 592.4 L890.6 583.9 L884.3 576 L877.8 568.4 L871.2 561.4 L864.5 554.8 L857.9 548.7 L851.3 543.4 L844.8 538.6 L838.3 533.8M1006.1 829.7 L1005.1 816.9 L1004.1 804.1 L1002.7 791.2 L1001 778.3 L999 765.2 L996.5 752.1 L993 738.8 L989.1 725.5 L985 712.3 L981.1 699.4 L977.2 686.6 L972.7 674 L967.5 661.5 L961.9 649.1 L956 637.1 L950 625.3 L943.8 613.8 L937.5 602.7 L931 592.1 L924.3 581.8 L917.5 572 L910.6 562.8 L903.5 554.1 L896.3 545.8 L888.9 538.1 L881.4 530.8 L873.9 524.2 L866.6 518.4 L859.3 513.2 L852 508M1037.1 833.8 L1036 819.7 L1034.9 805.6 L1033.5 791.5 L1031.6 777.2 L1029.4 762.8 L1026.6 748.4 L1022.8 733.8 L1018.3 719.2 L1013.8 704.7 L1009.5 690.5 L1005.1 676.4 L1000.2 662.6 L994.4 648.9 L988.1 635.3 L981.5 622.1 L974.9 609.2 L968 596.6 L960.9 584.5 L953.7 572.8 L946.2 561.6 L938.6 550.9 L930.9 540.8 L923 531.3 L915 522.3 L906.8 513.9 L898.4 506 L890.1 498.8 L882 492.5 L873.9 486.9 L865.8 481.3M762.3 768 L771 771.9 L780 775.6 L789.7 779 L799.7 782.2 L809.9 785.5 L820.4 788.8 L831.4 792.3 L842.9 795.9 L854.9 799.4 L867.3 802.8 L879.8 806 L892.6 809 L905.6 811.9 L918.9 814.7 L932.8 817.5 L947 820.3 L961.4 822.9 L976.1 825.4 L991 827.6 L1006.1 829.7 L1021.5 831.8 L1037.1 833.8 L1052.9 835.6 L1068.8 837.3M762.3 768 L770.7 770 L779.4 771.8 L788.9 773.2 L798.8 774.5 L808.8 776.1 L819.2 777.8 L830 779.3 L841.3 780.8 L853.1 782.3 L865.3 783.7 L877.6 784.9 L890.2 786 L903.1 786.9 L916.4 787.7 L930.1 788.6 L944.1 789.4 L958.4 790.1 L972.9 790.7 L987.7 791 L1002.7 791.2 L1018 791.4 L1033.5 791.5 L1049.2 791.4 L1065 791.3M762.3 768 L770.3 768.1 L778.7 768 L787.9 767.3 L797.5 766.7 L807.2 766.6 L817.2 766.5 L827.8 766 L838.8 765.4 L850.2 764.9 L862 764.3 L874 763.5 L886.3 762.6 L899 761.4 L912 760.2 L925.4 759.1 L939 758 L953 756.8 L967.2 755.3 L981.7 753.8 L996.5 752.1 L1011.4 750.3 L1026.6 748.4 L1042 746.5 L1057.5 744.5M762.3 768 L769.8 766.1 L777.5 764.1 L786.3 761.4 L795.4 758.7 L804.6 756.9 L814.1 755 L824.1 752.5 L834.5 749.7 L845.3 747.1 L856.5 744.5 L867.9 741.7 L879.6 738.7 L891.8 735.5 L904.4 732.2 L917 729.2 L930 726.1 L943.3 722.8 L957 719.5 L970.9 715.9 L985 712.3 L999.3 708.5 L1013.8 704.7 L1028.6 700.9 L1043.5 697M762.3 768 L769.1 764.2 L776.3 760.2 L784.5 755.5 L793.2 750.9 L801.8 747.4 L810.7 743.9 L820.2 739.3 L830 734.4 L840.2 729.9 L850.6 725.4 L861.3 720.6 L872.5 715.7 L884.2 710.4 L896.2 705.1 L908.2 700.2 L920.4 695.2 L933.1 690.1 L946 684.8 L959.3 679.4 L972.7 674 L986.3 668.3 L1000.2 662.6 L1014.3 656.9 L1028.5 651.3M762.3 768 L768.4 762.4 L774.8 756.5 L782.3 749.9 L790.2 743.3 L798.1 738.3 L806.2 733.1 L814.9 726.6 L823.9 719.7 L833.2 713.2 L842.7 706.8 L852.6 700.1 L862.9 693.3 L873.8 686.1 L885 679 L896.1 672.2 L907.4 665.4 L919.1 658.5 L931.1 651.4 L943.5 644.3 L956 637.1 L968.7 629.6 L981.5 622.1 L994.7 614.7 L1008 607.4M762.3 768 L767.5 760.6 L773.1 753 L779.7 744.5 L786.9 736.2 L793.9 729.6 L801.2 723 L809.1 714.6 L817.2 705.8 L825.5 697.6 L834 689.4 L842.9 681 L852.2 672.4 L862.3 663.4 L872.6 654.5 L882.7 646 L892.9 637.6 L903.6 629 L914.6 620.2 L926 611.5 L937.5 602.7 L949.1 593.6 L960.9 584.5 L973 575.6 L985.3 566.7M762.3 768 L766.5 759 L771.2 749.8 L777 739.6 L783.3 729.7 L789.4 721.8 L795.9 713.8 L802.7 703.8 L809.9 693.2 L817.1 683.4 L824.6 673.7 L832.4 663.7 L840.7 653.6 L849.9 643 L859.2 632.5 L868.2 622.5 L877.2 612.7 L886.9 602.6 L896.8 592.4 L907.1 582.3 L917.5 572 L928 561.5 L938.6 550.9 L949.7 540.7 L960.8 530.5M762.3 768 L765.5 757.6 L769.2 747 L774.1 735.4 L779.4 724.1 L784.6 715 L790.1 705.8 L796 694.3 L802 682.4 L808.2 671.2 L814.5 660.1 L821.2 648.8 L828.5 637.3 L836.6 625.4 L844.9 613.5 L852.7 602.3 L860.6 591.2 L869 579.9 L877.8 568.4 L887 557.2 L896.3 545.8 L905.5 534.1 L915 522.3 L924.8 511 L934.8 499.7M762.3 768 L764.5 756.4 L767.1 744.6 L770.9 731.8 L775.3 719.3 L779.5 709.3 L784 699.1 L788.8 686.5 L793.8 673.3 L798.7 660.9 L803.9 648.7 L809.4 636.3 L815.5 623.7 L822.6 610.7 L829.8 597.7 L836.4 585.5 L843 573.4 L850.3 561.1 L857.9 548.7 L865.8 536.5 L873.9 524.2 L881.9 511.5 L890.1 498.8 L898.7 486.6 L907.5 474.5M762.3 768 L763.4 755.5 L765 742.8 L767.8 729 L771.2 715.7 L774.5 704.9 L778 694 L781.7 680.4 L785.6 666.3 L789.4 653.1 L793.4 640 L797.8 626.8 L802.8 613.4 L808.8 599.5 L815 585.8 L820.4 572.8 L825.8 560 L831.9 546.9 L838.3 533.8 L845.1 520.9 L852 508 L858.8 494.6 L865.8 481.3 L873.2 468.5 L880.8 455.8M722.2 697.9 L765 742.8M725.4 677.9 L771.2 715.7M730.1 653.4 L778 694M736.1 631.2 L785.6 666.3M744.2 605.6 L793.4 640M750.4 579.6 L802.8 613.4M760.8 553.3 L815 585.8M770.8 527.5 L825.8 560M781.7 500.8 L838.3 533.8M792.5 475 L852 508M806.7 449.2 L865.8 481.3M718.9 715.7 L763.6 755.4M780 775.6 L780 794.8M799.7 782.2 L799.7 803.4M820.4 788.8 L820.4 812.2M842.9 795.9 L842.9 821.1M867.3 802.8 L867.3 830M892.6 809 L892.6 838.8M918.9 814.7 L918.9 847.3M947 820.3 L947 855.4M976.1 825.4 L976.1 862.9M1006.1 829.7 L1006.1 869.5M1037.1 833.8 L1037.1 875.5M1068.8 837.3 L1068.8 879.7M762.3 768 L762.3 787M1068.8 837.3 L1068.4 831.6 L1067.9 825.8 L1067.5 820.1 L1067.1 814.3 L1066.7 808.6 L1066.2 802.9 L1065.7 797.1 L1065 791.3 L1064.3 785.5 L1063.5 779.7 L1062.7 773.8 L1061.9 768 L1061 762.1 L1059.9 756.3 L1058.8 750.4 L1057.5 744.5 L1056.1 738.6 L1054.5 732.6 L1052.8 726.7 L1051 720.7 L1049.1 714.7 L1047.2 708.8 L1045.3 702.9 L1043.5 697 L1041.7 691.2 L1039.9 685.4 L1038.2 679.7 L1036.4 673.9 L1034.6 668.2 L1032.7 662.6 L1030.6 656.9 L1028.5 651.3 L1026.2 645.7 L1023.8 640.1 L1021.3 634.6 L1018.7 629 L1016.1 623.5 L1013.4 618.1 L1010.7 612.7 L1008 607.4 L1005.3 602.1 L1002.5 596.9 L999.7 591.7 L996.9 586.6 L994 581.5 L991.2 576.5 L988.2 571.6 L985.3 566.7 L982.3 561.9 L979.3 557.2 L976.3 552.6 L973.3 548 L970.2 543.5 L967.1 539.1 L963.9 534.7 L960.8 530.5 L957.6 526.4 L954.4 522.3 L951.2 518.3 L948 514.4 L944.7 510.6 L941.4 506.9 L938.1 503.2 L934.8 499.7 L931.4 496.2 L928.1 492.9 L924.6 489.6 L921.2 486.3 L917.8 483.2 L914.3 480.2 L910.9 477.3 L907.5 474.5 L904.1 471.9 L900.8 469.4 L897.4 467 L894.1 464.7 L890.8 462.5 L887.5 460.3 L884.1 458.1 L880.8 455.8M818.3 425 L880.8 455.8" fill="none" stroke="#000" stroke-width="1"/></svg></div>
<div class="abs" style="left:1634px;top:81px;width:6px;height:931px;background:linear-gradient(to right,#fff 0,#fff 2px,#f0f0f0 2px)"></div>
<div class="abs" style="left:1640px;top:81px;width:279px;height:18px;background:linear-gradient(#bdcee5,#dce7f5);font-size:12px;line-height:17px;white-space:nowrap"><span class="abs" style="left:4px;top:3px;letter-spacing:-0.39px">Default Tray</span>
<svg class="abs" style="left:246px;top:3px" width="12" height="13" viewBox="0 0 12 13"><path d="M3.5 2 H7.5 V7 H3.5 Z M2 7.5 H9.5 M5.5 7.5 V11.5" fill="none" stroke="#000" stroke-width="1.1"/><path d="M6.5 2 V7" stroke="#000" stroke-width="1.6"/></svg>
<div class="abs" style="left:264px;top:4px;width:12px;height:12px;background:#c9444e;color:#fff;font-size:10px;font-weight:bold;line-height:11px;text-align:center">x</div></div>
<div class="hdr" style="left:1640px;top:101px"><i class="tri-d"></i><span class="tx">Entity Info</span><span class="cl">×</span></div>
<div class="abs" style="left:1903px;top:100px;width:16px;height:597px;background:#f0f0f0"></div>
<svg class="abs" style="left:1905px;top:105px" width="12" height="8" viewBox="0 0 12 8"><path d="M1.5 6.5 L6 2 L10.5 6.5" fill="none" stroke="#505050" stroke-width="1.4"/></svg>
<div class="abs" style="left:1904px;top:118px;width:15px;height:17px;background:#cdcdcd"></div>
<div class="abs" style="left:1649px;top:126px;font-size:11.5px;font-weight:bold;white-space:nowrap" id="nosel">No Selection</div>
<svg class="abs" style="left:1885px;top:123px" width="12" height="16" viewBox="0 0 12 16"><rect x="0.5" y="0.5" width="10" height="7" fill="#fff" stroke="#999" stroke-width="0.6"/><path d="M2 2 H9.5 L5.7 6Z" fill="#000"/><rect x="0.5" y="7.5" width="10" height="7.5" fill="#000"/><path d="M5.7 8.7 V13.7 M3.2 11.2 H8.2" stroke="#fff" stroke-width="1.5"/></svg>
<div class="abs" style="left:1642px;top:142px;width:237px;height:1px;background:#9f9f9f"></div>
<div class="hdr" style="left:1640px;top:267px"><i class="tri-d"></i><span class="tx">Materials</span><span class="cl">×</span></div>
<div class="abs" style="left:1642px;top:287px;width:66px;height:70px;border:1px solid #b5b5b5;background:#f6f6f6"><div class="abs" style="left:0;top:1px;width:64px;height:64px;background:#cc0000"></div><svg class="abs" style="left:53px;top:54px" width="10" height="10" viewBox="0 0 10 10"><path d="M1 9.5 H9.5 V1Z" fill="#f2dada"/></svg></div>
<div class="abs" style="left:1711px;top:286px;width:164px;height:19px;background:#fff;border:1px solid #e3e3e3;border-top:2px solid #6a6a6a;border-left:2px solid #6a6a6a;font-size:11px;line-height:16px;padding-left:3px;white-space:nowrap;letter-spacing:-0.18px">Color A06</div>
<svg class="abs" style="left:1884px;top:289px" width="12" height="16" viewBox="0 0 12 16"><rect x="0.5" y="0.5" width="10" height="7" fill="#fff" stroke="#999" stroke-width="0.6"/><path d="M2 2 H9.5 L5.7 6Z" fill="#000"/><rect x="0.5" y="7.5" width="10" height="7.5" fill="#000"/><path d="M5.7 8.7 V13.7 M3.2 11.2 H8.2" stroke="#fff" stroke-width="1.5"/></svg>
<svg class="abs" style="left:1879px;top:310px" width="21" height="21" viewBox="0 0 21 21"><path d="M3.5 6 L12 1.5 L19 4 L19 12 L10.5 17.5 L3.5 14Z" fill="#3a372c" stroke="#111" stroke-width="0.8"/><path d="M3.5 6 L12 1.5 L19 4 L10.5 9Z" fill="#d8cfa0" stroke="#111" stroke-width="0.6"/><path d="M6.5 4.8 L13.5 7.4 M9.5 3.2 L16.4 5.6" stroke="#4a3c10" stroke-width="1.2"/><path d="M10.5 9 V17.5" stroke="#111" stroke-width="0.6"/><circle cx="5.5" cy="15" r="4" fill="#fff" stroke="#111" stroke-width="0.9"/><path d="M5.5 12.6 V17.4 M3.1 15 H7.9" stroke="#111" stroke-width="1"/></svg>
<svg class="abs" style="left:1879px;top:334px" width="22" height="22" viewBox="0 0 22 22"><rect width="22" height="22" fill="#fff"/><path d="M0 0 L22 22 H0Z" fill="#9fb0bd"/></svg>
<div class="abs" style="left:1640px;top:359px;width:263px;height:2px;border-top:1px solid #a8a8a8;background:#fff"></div>
<div class="abs" style="left:1684px;top:368px;width:41px;height:19px;border-right:2px solid #8a8a8a;border-top:1px solid #dcdcdc;font-size:12px;line-height:19px;padding-left:4px;letter-spacing:-0.1px;font-size:11px">Edit</div>
<div class="abs" style="left:1640px;top:366px;width:45px;height:22px;border-right:2px solid #8a8a8a;border-top:1px solid #fff;border-left:1px solid #fff;background:#f0f0f0;font-size:12px;line-height:18px;padding-left:5px;letter-spacing:-0.2px;font-size:11px">Select</div>
<div class="abs" style="left:1685px;top:387px;width:218px;height:1px;background:#fff"></div>
<svg class="abs" style="left:1880px;top:363px" width="20" height="20" viewBox="0 0 20 20"><path d="M2 18 L3 14.5 L11.5 6 L14 8.5 L5.5 17Z" fill="#e8e0c0" stroke="#222" stroke-width="0.8"/><path d="M2 18 L3 14.5 L5.5 17Z" fill="#e8a000"/><path d="M10.5 5 L15 9.5 M11.5 6 L15.5 2 Q18 1.5 18 4.5 L14 8.5" fill="#333" stroke="#222" stroke-width="1.6"/></svg>
<svg class="abs" style="left:1644px;top:392px" width="70" height="22" viewBox="0 0 70 22"><path d="M3 9.5 L10.5 3 V7 H16 V12 H10.5 V16Z" fill="#fff" stroke="#000" stroke-width="1.2" stroke-linejoin="miter"/><path d="M40.5 9.5 L33 3 V7 H27.5 V12 H33 V16Z" fill="#fff" stroke="#b5b5b5" stroke-width="1.2"/><path d="M49 10.5 L57.5 2.5 L66 10.5 M51.5 9 V17.5 H63.5 V9 M55.5 17.5 V12 H59.5 V17.5" fill="#fff" stroke="#000" stroke-width="1.4"/></svg>
<div class="abs" style="left:1715px;top:393px;width:161px;height:22px;background:#fff;border:1px solid #e3e3e3;border-top:2px solid #6a6a6a;border-left:2px solid #6a6a6a;font-size:11px;line-height:20px;padding-left:3px;letter-spacing:-0.35px">Colors<div class="abs" style="right:0;top:0;width:16px;height:19px;background:#f0f0f0;border-right:1px solid #6a6a6a;border-bottom:1px solid #6a6a6a;border-left:1px solid #fff"><i class="abs" style="left:3px;top:8px;border-left:4px solid transparent;border-right:4px solid transparent;border-top:4px solid #000"></i></div></div>
<svg class="abs" style="left:1883px;top:393px" width="17" height="17" viewBox="0 0 17 17"><rect x="1" y="4" width="7" height="9" fill="#fff" stroke="#246" stroke-width="0.8"/><rect x="1" y="4" width="7" height="2.5" fill="#2a6fd0"/><path d="M2.5 8.5 H6.5 M2.5 10.5 H6.5" stroke="#555" stroke-width="0.7"/><path d="M8.5 1.5 L15.5 8.5 L8.5 15.5Z" fill="#000"/></svg>
<div class="abs" style="left:1640px;top:417px;width:246px;height:199px;background:#fff;border-top:1px solid #a0a0a0;overflow:hidden" id="grid">
<div class="sw" style="left:3px;top:-48px"><i style="background:#fff2bf"></i></div><div class="sw" style="left:55px;top:-48px"><i style="background:#ffe699"></i></div><div class="sw" style="left:107px;top:-48px"><i style="background:#ffd966"></i></div><div class="sw" style="left:159px;top:-48px"><i style="background:#ffcc33"></i></div><div class="sw" style="left:3px;top:6px"><i style="background:#ffbf00"></i></div><div class="sw" style="left:55px;top:6px"><i style="background:#cc9900"></i></div><div class="sw" style="left:107px;top:6px"><i style="background:#997300"></i></div><div class="sw" style="left:159px;top:6px"><i style="background:#664c00"></i></div><div class="sw" style="left:3px;top:58px"><i style="background:#ffffcc"></i></div><div class="sw" style="left:55px;top:58px"><i style="background:#ffff99"></i></div><div class="sw" style="left:107px;top:58px"><i style="background:#ffff66"></i></div><div class="sw" style="left:159px;top:58px"><i style="background:#ffff33"></i></div><div class="sw" style="left:3px;top:110px"><i style="background:#ffff00"></i></div><div class="sw" style="left:55px;top:110px"><i style="background:#cccc00"></i></div><div class="sw" style="left:107px;top:110px"><i style="background:#999900"></i></div><div class="sw" style="left:159px;top:110px"><i style="background:#666600"></i></div><div class="sw" style="left:3px;top:162px"><i style="background:#e6ffcc"></i></div><div class="sw" style="left:55px;top:162px"><i style="background:#ccff99"></i></div><div class="sw" style="left:107px;top:162px"><i style="background:#b3ff66"></i></div><div class="sw" style="left:159px;top:162px"><i style="background:#99ff33"></i></div>
</div>
<div class="abs" style="left:1886px;top:417px;width:17px;height:199px;background:#f0f0f0"></div>
<svg class="abs" style="left:1888px;top:422px" width="12" height="8" viewBox="0 0 12 8"><path d="M1.5 6.5 L6 2 L10.5 6.5" fill="none" stroke="#505050" stroke-width="1.4"/></svg>
<svg class="abs" style="left:1888px;top:603px" width="12" height="8" viewBox="0 0 12 8"><path d="M1.5 1.5 L6 6 L10.5 1.5" fill="none" stroke="#505050" stroke-width="1.4"/></svg>
<div class="abs" style="left:1887px;top:473px;width:15px;height:17px;background:#cdcdcd"></div>
<div class="abs" style="left:1640px;top:617px;width:263px;height:4px;border:1px solid #c4c4c4;background:#f6f6f6"></div>
<div class="hdr" style="left:1640px;top:623px"><i class="tri-r"></i><span class="tx">Components</span><span class="cl">×</span></div>
<div class="hdr" style="left:1640px;top:642px"><i class="tri-r"></i><span class="tx" style="letter-spacing:-0.53px">Styles</span><span class="cl">×</span></div>
<div class="hdr" style="left:1640px;top:661px"><i class="tri-r"></i><span class="tx" style="letter-spacing:-0.38px">Shadows</span><span class="cl">×</span></div>
<div class="hdr" style="left:1640px;top:680px"><i class="tri-d"></i><span class="tx">Instructor</span><span class="cl">×</span></div>
<div class="abs" style="left:1640px;top:697px;width:246px;height:315px;background:#fff;overflow:hidden;font-family:'Liberation Sans',sans-serif">
<svg class="abs" style="left:60px;top:52px" width="160" height="78" viewBox="1700 749 160 78"><g fill="none" stroke="#000" stroke-width="1.4" stroke-linejoin="round"><path d="M1704 785 L1718 753 L1827 760 L1854 785 L1854 816 L1848 818 L1806 822.5 L1751 821.5 L1704 818 Z"/><path d="M1718 753 L1732.5 781 L1732.5 821"/><path d="M1732.5 781 L1781.5 782 L1808 781 L1845 782 L1848 785 L1854 785"/><path d="M1781.5 782 L1786 765 L1827 760 L1808 781 L1808.5 822"/><path d="M1781.5 782 L1781.5 822"/><path d="M1827 760 L1848 785 L1848 818"/></g>
<ellipse cx="1720.5" cy="809" rx="10.5" ry="7.5" fill="#c8e6cc" stroke="#777" stroke-width="0.8"/><path d="M1710.5 809 Q1711 815.5 1720 816.5 L1722 813 Q1714 812 1713.5 808Z" fill="#d43a3a" stroke="#722" stroke-width="0.5"/><path d="M1711 806 Q1715 802.5 1720 803 L1720 806 Q1715 806 1713 808Z" fill="#d86a6a"/><path d="M1720 797 V821" stroke="#222" stroke-width="1.3"/></svg>
<div class="abs" style="left:26px;top:209.5px;font-size:19.5px;font-weight:bold;white-space:nowrap;line-height:22px" id="orbit">Orbit Tool</div>
<div class="abs" style="left:29px;top:229px;font-size:13px;color:#8e8e8e;white-space:nowrap;line-height:14px" id="rot">Rotate camera about model.</div>
<div class="abs" style="left:27px;top:263px;font-size:14.5px;font-weight:bold;color:#3c3c3c;white-space:nowrap;line-height:16px" id="toolop">Tool Operation</div>
<div class="abs" style="left:22px;top:280px;font-size:13px;color:#8e8e8e;white-space:nowrap;line-height:16px">1.</div>
<div class="abs" style="left:45px;top:280px;font-size:13px;color:#8e8e8e;white-space:nowrap;line-height:15.5px">Click anywhere in drawing<br>area.<br>Move cursor in any direction</div>
<div class="abs" style="left:22px;top:311px;font-size:13px;color:#8e8e8e;white-space:nowrap;line-height:15.5px">2.</div>
</div>
<div class="abs" style="left:1886px;top:697px;width:17px;height:315px;background:#f0f0f0"></div>
<div class="abs" style="left:1887px;top:730px;width:15px;height:265px;background:#c8c8c8"></div>
<svg class="abs" style="left:1888px;top:714px" width="12" height="8" viewBox="0 0 12 8"><path d="M1.5 6.5 L6 2 L10.5 6.5" fill="none" stroke="#505050" stroke-width="1.4"/></svg>
<svg class="abs" style="left:1888px;top:1001px" width="12" height="8" viewBox="0 0 12 8"><path d="M1.5 1.5 L6 6 L10.5 1.5" fill="none" stroke="#505050" stroke-width="1.4"/></svg>
<div id="status">
<svg class="abs" style="left:4px;top:5px" width="84" height="20" viewBox="0 0 84 20"><circle cx="9" cy="9.5" r="6.6" fill="#f4f4f4" stroke="#b4b4b4" stroke-width="1.2"/><path d="M9 5 Q12 5.5 11.5 9 Q11 11 9 14 Q7 11 6.5 9 Q6 5.5 9 5Z" fill="#c8c8c8"/><circle cx="39" cy="9.5" r="6.6" fill="#fff" stroke="#111" stroke-width="1.5"/><circle cx="39" cy="6.3" r="1.4" fill="#111"/><path d="M36.8 8.3 H41.2 V11.5 H40.3 V14 H37.7 V11.5 H36.8Z" fill="#111"/><circle cx="69" cy="9.5" r="6.6" fill="#fff" stroke="#111" stroke-width="1.5"/><circle cx="69" cy="7.2" r="2.5" fill="#111"/><path d="M63.8 13.5 Q65 10.2 69 10.2 Q73 10.2 74.2 13.5 Q72 16 69 16 Q66 16 63.8 13.5Z" fill="#111"/></svg>
<div class="abs" style="left:92px;top:10px;width:1px;height:9px;background:#9a9a9a"></div>
<div class="abs" style="left:103px;top:8px;font-size:13px;letter-spacing:0.14px;white-space:nowrap;line-height:15px" id="stat">Drag to orbit. Shift = Pan, Ctrl = suspend gravity.</div>
<div class="abs" style="left:1609px;top:10px;width:1px;height:9px;background:#9a9a9a"></div>
<div class="abs" style="left:1620px;top:8px;font-size:13px;white-space:nowrap;line-height:15px" id="meas">Measurements</div>
<div class="abs" style="left:1715px;top:4px;width:200px;height:23px;border:1px solid #a9bfdd;background:#f0f0f0"></div>
</div>
<div id="taskbar">
<svg class="abs" style="left:0;top:0" width="1919" height="39" viewBox="0 1040 1919 39">
<path d="M16 1054.2 L22.6 1053.3 V1059.5 H16Z M23.6 1053.15 L32 1052 V1059.5 H23.6Z M16 1060.5 H22.6 V1066.7 L16 1065.8Z M23.6 1060.5 H32 V1068 L23.6 1066.85Z" fill="#fff"/>
<rect x="48" y="1040" width="344" height="39" fill="#3b3b3b"/>
<circle cx="68" cy="1060" r="9" fill="none" stroke="#fff" stroke-width="2.6"/>
<text x="88" y="1065.5" font-family="Liberation Sans,sans-serif" font-size="15" fill="#a6a6a6" textLength="108" lengthAdjust="spacingAndGlyphs">Ask me anything</text>
<g fill="none" stroke="#8c8c8c" stroke-width="1.2"><rect x="368.5" y="1051.5" width="5" height="10" rx="2.5"/><path d="M366.5 1059 Q366.5 1064 371 1064 Q375.5 1064 375.5 1059 M371 1064 V1067 M368.5 1067.5 H373.5"/></g>
<g fill="none" stroke="#fff" stroke-width="1.3"><rect x="410.5" y="1054.5" width="11" height="12"/><path d="M408 1056 H406.5 V1065 H408 M424 1056 H425.5 V1065 H424"/></g>
<!-- explorer -->
<path d="M454 1050 H462 L464 1052 H476 V1069 H454Z" fill="#e8b93c"/><path d="M454 1055 H476 V1069 H454Z" fill="#f7d774"/><path d="M459 1062 H471 V1069 H467.5 V1066 H462.5 V1069 H459Z" fill="#2d9be0"/>
<!-- chrome -->
<circle cx="514.5" cy="1060" r="11" fill="#db4437"/><path d="M514.5 1060 L505 1065.5 A11 11 0 0 0 518.5 1070.2Z" fill="#0f9d58"/><path d="M514.5 1060 L505 1065.5 A11 11 0 0 1 505 1054.5 Z" fill="#0f9d58"/><path d="M514.5 1060 L524 1054.5 A11 11 0 0 1 518.5 1070.2 Z" fill="#ffcd40"/><path d="M514.5 1060 L525.5 1060 A11 11 0 0 0 524 1054.5Z" fill="#ffcd40"/><circle cx="514.5" cy="1060" r="5.2" fill="#fff"/><circle cx="514.5" cy="1060" r="4.1" fill="#4285f4"/>
<!-- word -->
<path d="M552 1051 L565 1048.5 V1071.5 L552 1069Z" fill="#2b579a"/><rect x="565" y="1051.5" width="9" height="17" fill="#fff" stroke="#2b579a" stroke-width="1"/><path d="M566.5 1055 H572.5 M566.5 1058 H572.5 M566.5 1061 H572.5 M566.5 1064 H572.5" stroke="#2b579a" stroke-width="1"/><text x="553.6" y="1064.5" font-family="Liberation Sans,sans-serif" font-size="11" font-weight="bold" fill="#fff">W</text>
<!-- ppt -->
<path d="M601 1051 L614 1048.5 V1071.5 L601 1069Z" fill="#d24726"/><rect x="614" y="1051.5" width="9" height="17" fill="#fff" stroke="#d24726" stroke-width="1"/><circle cx="618.5" cy="1057" r="2.8" fill="none" stroke="#d24726" stroke-width="1.2"/><path d="M615.5 1063 H621.5 M615.5 1065.5 H621.5" stroke="#d24726" stroke-width="1"/><text x="604" y="1064.5" font-family="Liberation Sans,sans-serif" font-size="11" font-weight="bold" fill="#fff">P</text>
<!-- project -->
<path d="M650 1051 L663 1048.5 V1071.5 L650 1069Z" fill="#31752f"/><rect x="663" y="1051.5" width="9" height="17" fill="#fff" stroke="#31752f" stroke-width="1"/><path d="M665 1055 H670.5 V1060 M666 1058 H669 V1065" fill="none" stroke="#31752f" stroke-width="1.2"/><text x="653" y="1064.5" font-family="Liberation Sans,sans-serif" font-size="11" font-weight="bold" fill="#fff">P</text>
<!-- excel -->
<path d="M699 1051 L712 1048.5 V1071.5 L699 1069Z" fill="#1f7244"/><rect x="712" y="1051.5" width="9" height="17" fill="#fff" stroke="#1f7244" stroke-width="1"/><path d="M712 1055.5 H721 M712 1059 H721 M712 1062.5 H721 M712 1066 H721 M716.5 1051.5 V1068.5" stroke="#1f7244" stroke-width="0.9"/><text x="702" y="1064.5" font-family="Liberation Sans,sans-serif" font-size="11" font-weight="bold" fill="#fff">X</text>
<!-- calc -->
<rect x="751" y="1048.5" width="17" height="23" fill="#fff"/><rect x="753" y="1050.5" width="13" height="4" fill="#111"/><g fill="#111"><rect x="753" y="1057" width="2.5" height="2.5"/><rect x="756.5" y="1057" width="2.5" height="2.5"/><rect x="760" y="1057" width="2.5" height="2.5"/><rect x="763.5" y="1057" width="2.5" height="2.5"/><rect x="753" y="1061" width="2.5" height="2.5"/><rect x="756.5" y="1061" width="2.5" height="2.5"/><rect x="760" y="1061" width="2.5" height="2.5"/><rect x="763.5" y="1061" width="2.5" height="2.5"/><rect x="753" y="1065" width="2.5" height="2.5"/><rect x="756.5" y="1065" width="2.5" height="2.5"/><rect x="760" y="1065" width="2.5" height="2.5"/><rect x="763.5" y="1065" width="2.5" height="2.5"/></g>
<!-- blender -->
<path d="M797 1062 L808 1053 L806 1051.5 L808.5 1050 L818 1057 Q821 1061 818 1065 Q813 1069 807 1066 L803 1064 H797Z" fill="#f5792a"/><circle cx="812" cy="1061" r="4.6" fill="#fff"/><circle cx="812" cy="1061" r="2.7" fill="#265787"/>
<!-- ship -->
<path d="M857.5 1047 L866.5 1064 L863 1069 H852 L848.5 1064Z" fill="#16335e"/><path d="M857.5 1047 V1069 M853 1056 H862 M851 1061 H864 M855 1051.5 L853 1069 M860 1051.5 L862 1069" stroke="#3a6ab0" stroke-width="0.9" fill="none"/><path d="M851 1069 v3 h3 v-3 M861 1069 v3 h3 v-3" fill="#1d4a8a" stroke="#1d4a8a"/>
<rect x="838" y="1077" width="45" height="2" fill="#e8b4b4"/>
<!-- sketchup active -->
<rect x="883" y="1040" width="48" height="39" fill="#3d3d3d"/><rect x="883" y="1077" width="48" height="2" fill="#f2c6c6"/>
<path d="M895.5 1054 L908 1049.5 L918.5 1053 L917 1066 L905 1071 L897 1066.5Z" fill="#e2231a"/><path d="M895.5 1054 L908 1049.5 L918.5 1053 L906 1058Z" fill="#f3574c"/><path d="M906 1058 L905 1071 L897 1066.5 L895.5 1054Z" fill="#b5140f"/><path d="M901 1055.2 L911 1052.5 L912 1054.5 L905 1056.5 L905.5 1058 L913 1056 L913.5 1062 L904 1065.5 L903.5 1063.3 L910.5 1060.8 L910.2 1059.3 L902.5 1061.5Z" fill="#fff"/>
<!-- tray -->
<path d="M1731 1062.5 L1737 1056.5 L1743 1062.5" fill="none" stroke="#fff" stroke-width="1.2"/>
<path d="M1757.5 1052 L1761 1054.2 L1757.5 1056.4 L1754 1054.2Z M1764.5 1052 L1768 1054.2 L1764.5 1056.4 L1761 1054.2Z M1757.5 1056.6 L1761 1058.8 L1757.5 1061 L1754 1058.8Z M1764.5 1056.6 L1768 1058.8 L1764.5 1061 L1761 1058.8Z M1761 1059.6 L1764.2 1061.7 L1761 1063.8 L1757.8 1061.7Z" fill="#fff"/><circle cx="1765" cy="1063.5" r="3.6" fill="#3cb54a"/><path d="M1763.2 1063.5 L1764.6 1065 L1767 1062.2" fill="none" stroke="#fff" stroke-width="0.9"/>
<g fill="none" stroke="#9a9a9a" stroke-width="1.1"><path d="M1780 1066 A12 12 0 0 1 1792 1054"/><path d="M1783.5 1066 A8.5 8.5 0 0 1 1792 1057.5"/><path d="M1787 1066 A5 5 0 0 1 1792 1061"/></g><rect x="1789.5" y="1063.5" width="3" height="3" fill="#fff"/>
<path d="M1801.5 1057.5 H1804 L1807.5 1054 V1066 L1804 1062.5 H1801.5Z" fill="none" stroke="#fff" stroke-width="1.1"/><path d="M1810 1057.5 Q1811.5 1060 1810 1062.5" fill="none" stroke="#fff" stroke-width="1"/><path d="M1812.5 1055.5 Q1815 1060 1812.5 1064.5" fill="none" stroke="#aaa" stroke-width="1"/><path d="M1815 1053.5 Q1818.5 1060 1815 1066.5" fill="none" stroke="#666" stroke-width="1"/>
<path d="M1825.5 1052.5 H1840.5 V1064.5 H1835.5 L1833 1067 L1830.5 1064.5 H1825.5Z M1828.5 1056 H1837.5 M1828.5 1058.5 H1837.5 M1828.5 1061 H1837.5" fill="none" stroke="#fff" stroke-width="1.1"/>
<text x="1857" y="1055" font-family="Liberation Sans,sans-serif" font-size="12" fill="#fff" textLength="47.5" lengthAdjust="spacingAndGlyphs">10:31 PM</text>
<text x="1854.5" y="1071.5" font-family="Liberation Sans,sans-serif" font-size="12" fill="#fff" textLength="51.5" lengthAdjust="spacingAndGlyphs">1/24/2016</text>
<rect x="1915" y="1040" width="1" height="39" fill="#5a5a5a"/>
</svg>
</div>
</body>
</html>
